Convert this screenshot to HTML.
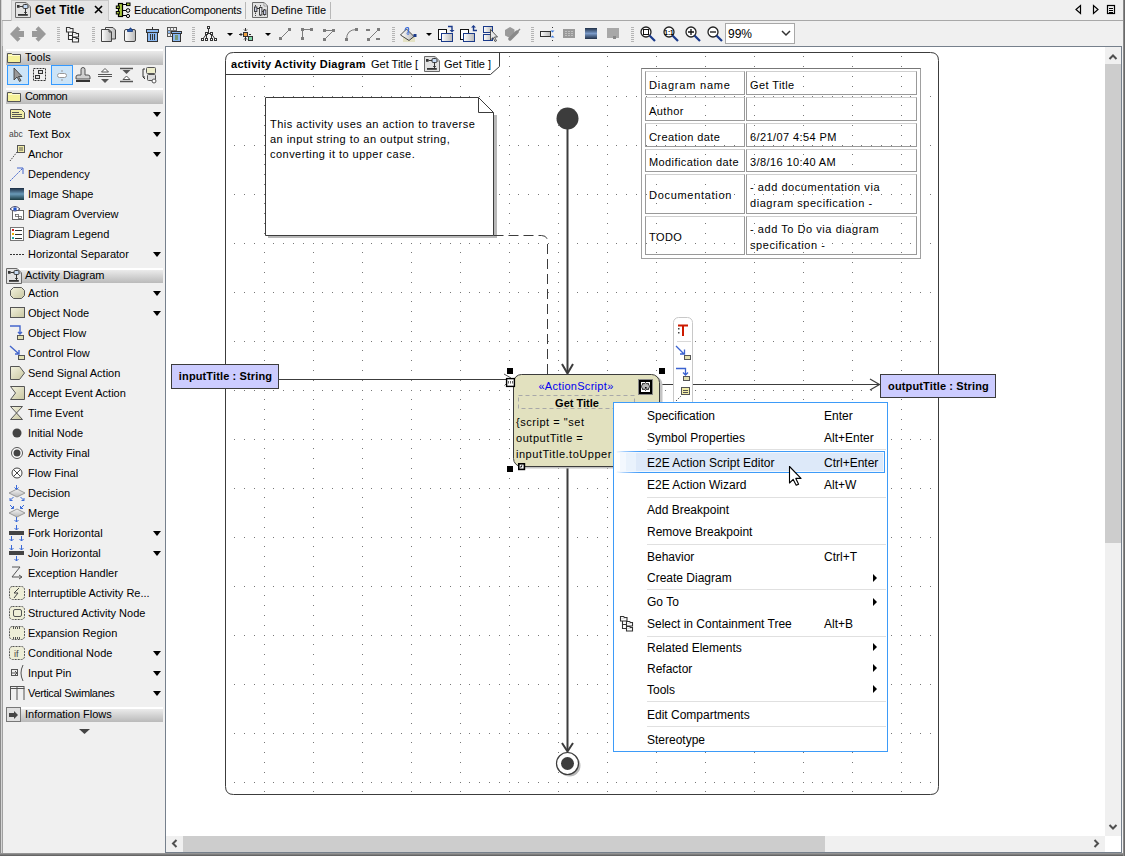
<!DOCTYPE html><html><head><meta charset="utf-8"><style>
*{margin:0;padding:0;box-sizing:border-box}
html,body{width:1125px;height:856px;overflow:hidden;background:#f0f0f0;font-family:"Liberation Sans",sans-serif;font-size:12px;color:#000}
.a{position:absolute}
.t{position:absolute;white-space:nowrap;line-height:14px}
</style></head><body><div class="a" style="left:0;top:0;width:1px;height:856px;background:#8a8a8a"></div><div class="a" style="left:1px;top:0;width:1px;height:856px;background:#d4d4d4"></div><div class="a" style="left:2px;top:21px;width:1px;height:835px;background:#a0a0a0"></div><div class="a" style="left:0;top:853px;width:1125px;height:3px;background:linear-gradient(#a0a0a0,#5a5a5a)"></div><div class="a" style="left:1123px;top:0;width:2px;height:856px;background:linear-gradient(90deg,#9a9a9a,#5a5a5a)"></div><div class="a" style="left:2px;top:20px;width:1121px;height:1px;background:#a8a8a8"></div><div class="a" style="left:11px;top:0;width:98px;height:21px;background:#e4e4e4;border:1px solid #c8c8c8;border-bottom:none"></div><div class="t" style="left:35px;top:3px;font-weight:bold;font-size:12px;letter-spacing:0.2px">Get Title</div><div class="t" style="left:134px;top:3px;font-size:11px;letter-spacing:-0.2px">EducationComponents</div><div class="a" style="left:245px;top:2px;width:1px;height:17px;background:#b8b8b8"></div><div class="t" style="left:271px;top:3px;font-size:11px">Define Title</div><div class="a" style="left:330px;top:2px;width:1px;height:17px;background:#b8b8b8"></div><div class="a" style="left:2px;top:21px;width:1px;height:25px;background:#c8c8c8"></div><div class="a" style="left:725px;top:23px;width:70px;height:21px;background:#fff;border:1px solid #a8a8a8"></div><div class="t" style="left:728px;top:27px;font-size:12px">99%</div><svg class="a" style="left:0;top:0" width="1125" height="48"><defs><linearGradient id="imgG" x1="0" y1="0" x2="0" y2="1"><stop offset="0" stop-color="#203048"/><stop offset="0.5" stop-color="#7a9ac8"/><stop offset="1" stop-color="#203048"/></linearGradient><linearGradient id="docG" x1="0" y1="0" x2="1" y2="0"><stop offset="0" stop-color="#ffffff"/><stop offset="1" stop-color="#b8b8b8"/></linearGradient></defs><path d="M95 6L102 13M102 6L95 13" stroke="#000" stroke-width="1.6"/><path d="M1080.5 5.5V13.5L1076 9.5Z" fill="none" stroke="#000" stroke-width="1.2"/><path d="M1093.5 5.5V13.5L1098 9.5Z" fill="none" stroke="#000" stroke-width="1.2"/><rect x="1107.5" y="5.5" width="7" height="8" fill="none" stroke="#000" stroke-width="1.2"/><path d="M1109 8.5H1113M1109 10.5H1113M1109 12.5H1113" stroke="#000" stroke-width="1"/><path d="M15.5 2.5H26L30.5 7V17.5H15.5Z" fill="#e2e2e2" stroke="#6a6a6a"/><path d="M26 2.5V7H30.5Z" fill="#fff" stroke="#888" stroke-width="0.8"/><rect x="17" y="5" width="2.6" height="2.8" fill="#333"/><path d="M19.5 6.5H23" stroke="#333"/><rect x="23" y="4.5" width="5" height="4" rx="1.2" fill="#c8dcf4" stroke="#333"/><path d="M25.5 8.5V14M24.2 12.5H26.8" stroke="#333"/><rect x="18" y="14" width="9.8" height="1.8" fill="#333"/><rect x="118.5" y="3.5" width="4" height="13" fill="#a8c83c" stroke="#000" stroke-width="1.2"/><rect x="116.3" y="6" width="3" height="2.5" fill="#a8c83c" stroke="#000"/><rect x="116.3" y="11.5" width="3" height="2.5" fill="#a8c83c" stroke="#000"/><path d="M122.5 4.5H126M122.5 10.5H126.5M122.5 15.5H126.5" stroke="#000"/><rect x="126.5" y="3" width="3.5" height="2.6" fill="#a8c83c" stroke="#000"/><circle cx="128" cy="10.5" r="1.8" fill="#eee" stroke="#000"/><circle cx="128" cy="16" r="1.6" fill="#eee" stroke="#000"/><path d="M252.5 2.5H264L267.5 6V17.5H252.5Z" fill="#e2e2e2" stroke="#6a6a6a"/><path d="M264 2.5V6H267.5Z" fill="#fff" stroke="#888" stroke-width="0.8"/><path d="M255.5 5V16M260.5 5V16M264.5 9V16" stroke="#444" stroke-dasharray="1.5 1"/><rect x="254.5" y="7" width="2.4" height="4.5" fill="#c8cde8" stroke="#333" stroke-width="0.9"/><rect x="259.5" y="7.5" width="2.4" height="7.5" fill="#e8e8f0" stroke="#333" stroke-width="0.9"/><rect x="263.5" y="10" width="2.4" height="4.5" fill="#c8cde8" stroke="#333" stroke-width="0.9"/><path d="M257 8.5H259.5M262 11.5H263.5" stroke="#333"/><path d="M10 34L17.5 26.3L20.5 29.3L18.5 31H24V37H18.5L20.5 38.7L17.5 41.7Z" fill="#9a9a9a"/><path d="M46 34L38.5 26.3L35.5 29.3L37.5 31H32V37H37.5L35.5 38.7L38.5 41.7Z" fill="#9a9a9a"/><rect x="57" y="27" width="3" height="1" fill="#b4b4b4"/><rect x="57" y="29" width="3" height="1" fill="#b4b4b4"/><rect x="57" y="31" width="3" height="1" fill="#b4b4b4"/><rect x="57" y="33" width="3" height="1" fill="#b4b4b4"/><rect x="57" y="35" width="3" height="1" fill="#b4b4b4"/><rect x="57" y="37" width="3" height="1" fill="#b4b4b4"/><rect x="57" y="39" width="3" height="1" fill="#b4b4b4"/><rect x="57" y="41" width="3" height="1" fill="#b4b4b4"/><rect x="92" y="27" width="3" height="1" fill="#b4b4b4"/><rect x="92" y="29" width="3" height="1" fill="#b4b4b4"/><rect x="92" y="31" width="3" height="1" fill="#b4b4b4"/><rect x="92" y="33" width="3" height="1" fill="#b4b4b4"/><rect x="92" y="35" width="3" height="1" fill="#b4b4b4"/><rect x="92" y="37" width="3" height="1" fill="#b4b4b4"/><rect x="92" y="39" width="3" height="1" fill="#b4b4b4"/><rect x="92" y="41" width="3" height="1" fill="#b4b4b4"/><rect x="192" y="27" width="3" height="1" fill="#b4b4b4"/><rect x="192" y="29" width="3" height="1" fill="#b4b4b4"/><rect x="192" y="31" width="3" height="1" fill="#b4b4b4"/><rect x="192" y="33" width="3" height="1" fill="#b4b4b4"/><rect x="192" y="35" width="3" height="1" fill="#b4b4b4"/><rect x="192" y="37" width="3" height="1" fill="#b4b4b4"/><rect x="192" y="39" width="3" height="1" fill="#b4b4b4"/><rect x="192" y="41" width="3" height="1" fill="#b4b4b4"/><rect x="392" y="27" width="3" height="1" fill="#b4b4b4"/><rect x="392" y="29" width="3" height="1" fill="#b4b4b4"/><rect x="392" y="31" width="3" height="1" fill="#b4b4b4"/><rect x="392" y="33" width="3" height="1" fill="#b4b4b4"/><rect x="392" y="35" width="3" height="1" fill="#b4b4b4"/><rect x="392" y="37" width="3" height="1" fill="#b4b4b4"/><rect x="392" y="39" width="3" height="1" fill="#b4b4b4"/><rect x="392" y="41" width="3" height="1" fill="#b4b4b4"/><rect x="531" y="27" width="3" height="1" fill="#b4b4b4"/><rect x="531" y="29" width="3" height="1" fill="#b4b4b4"/><rect x="531" y="31" width="3" height="1" fill="#b4b4b4"/><rect x="531" y="33" width="3" height="1" fill="#b4b4b4"/><rect x="531" y="35" width="3" height="1" fill="#b4b4b4"/><rect x="531" y="37" width="3" height="1" fill="#b4b4b4"/><rect x="531" y="39" width="3" height="1" fill="#b4b4b4"/><rect x="531" y="41" width="3" height="1" fill="#b4b4b4"/><rect x="631" y="27" width="3" height="1" fill="#b4b4b4"/><rect x="631" y="29" width="3" height="1" fill="#b4b4b4"/><rect x="631" y="31" width="3" height="1" fill="#b4b4b4"/><rect x="631" y="33" width="3" height="1" fill="#b4b4b4"/><rect x="631" y="35" width="3" height="1" fill="#b4b4b4"/><rect x="631" y="37" width="3" height="1" fill="#b4b4b4"/><rect x="631" y="39" width="3" height="1" fill="#b4b4b4"/><rect x="631" y="41" width="3" height="1" fill="#b4b4b4"/><g transform="translate(-554,-589)"><path d="M620.5 616.5h3l1 1h2.5v3.5h-6.5zM622.5 621v7.5h4v-7.5M622.5 624.5h4M626.5 621.5h3l1 1h2v3.5h-6zM626.5 626.5h3l1 1h2v3.5h-6z" fill="#fff" stroke="#333" stroke-width="1.1"/><path d="M621.5 618.5h4M627.5 623.5h4M627.5 628.5h4" stroke="#ddd"/></g><path d="M105.5 27.5h7.5l2.5 2.5v9h-10z" fill="url(#docG)" stroke="#444"/><path d="M101.5 29.5h7.5l2.5 2.5v9.5h-10z" fill="url(#docG)" stroke="#444"/><path d="M109 29.5v2.5h2.5" fill="none" stroke="#444"/><rect x="124.5" y="29.5" width="11" height="12" rx="1.5" fill="url(#docG)" stroke="#444"/><path d="M127.5 31.5v-2h2l.5-1.5h1l.5 1.5h1v2z" fill="#2d5fb0" stroke="#1a3a7a" stroke-width="0.8"/><rect x="147.5" y="32.5" width="10" height="9" fill="#8ab8f0" stroke="#333"/><rect x="146.5" y="29.5" width="12" height="3" fill="#8ab8f0" stroke="#333"/><path d="M152.5 27v2.5" stroke="#333"/><path d="M150.5 34v6M152.5 34v6M154.5 34v6" stroke="#333"/><rect x="167.5" y="27.5" width="9" height="9" fill="#f0f0f0" stroke="#555"/><path d="M170.5 27.5v9M173.5 27.5v6M167.5 30.5h9M167.5 33.5h5" stroke="#777"/><rect x="168" y="31" width="2" height="2" fill="#8ab8f0"/><rect x="172.5" y="33.5" width="8" height="8" fill="#8ab8f0" stroke="#333"/><rect x="171.5" y="31.5" width="10" height="2" fill="#8ab8f0" stroke="#333"/><rect x="175" y="35" width="3" height="5" fill="#7a9a7a"/><path d="M208.5 29v4M206.5 33.5h5M206.5 34v5.5M211.5 34v5.5M206.5 34L202.5 39.5M211.5 34L215.5 39.5" fill="none" stroke="#333"/><rect x="207.5" y="26.5" width="2" height="2" fill="#fff" stroke="#333"/><rect x="205.5" y="32.5" width="2" height="2" fill="#fff" stroke="#333"/><rect x="210.5" y="32.5" width="2" height="2" fill="#fff" stroke="#333"/><rect x="201.5" y="38.5" width="2" height="2" fill="#fff" stroke="#333"/><rect x="205.5" y="38.5" width="2" height="2" fill="#fff" stroke="#333"/><rect x="210.5" y="38.5" width="2" height="2" fill="#fff" stroke="#333"/><rect x="214.5" y="38.5" width="2" height="2" fill="#fff" stroke="#333"/><path d="M227 33h6l-3 3z" fill="#000"/><path d="M245.5 28v3M245.5 37v4M239 34.5h3M249 34.5h2M244 29.5l1.5 1.5 1.5-1.5M244 39.5l1.5-1.5 1.5 1.5M240.5 33l1.5 1.5-1.5 1.5" stroke="#333" fill="none"/><rect x="243.5" y="32.5" width="4" height="4" fill="#f0a040" stroke="#333"/><rect x="248.5" y="36.5" width="4" height="4" fill="#7fd8a8" stroke="#333"/><path d="M265 33h6l-3 3z" fill="#000"/><path d="M280.5 38.5L289.5 29.5" stroke="#7c7c7c" fill="none"/><rect x="279.0" y="37.0" width="3" height="3" fill="#7c7c7c"/><rect x="288.0" y="28.0" width="3" height="3" fill="#7c7c7c"/><path d="M302.5 38.5V29.5H311.5" stroke="#7c7c7c" fill="none"/><rect x="301.0" y="37.0" width="3" height="3" fill="#7c7c7c"/><rect x="301.0" y="28.0" width="3" height="3" fill="#7c7c7c"/><rect x="310.0" y="28.0" width="3" height="3" fill="#7c7c7c"/><path d="M324.5 30.5H333.5L324.5 39.5" stroke="#7c7c7c" fill="none"/><rect x="323.0" y="29.0" width="3" height="3" fill="#7c7c7c"/><rect x="332.0" y="29.0" width="3" height="3" fill="#7c7c7c"/><rect x="323.0" y="38.0" width="3" height="3" fill="#7c7c7c"/><path d="M346.5 39.5Q346.5 29.5 356.5 29.5" stroke="#7c7c7c" fill="none"/><rect x="345.0" y="38.0" width="3" height="3" fill="#7c7c7c"/><rect x="355.0" y="28.0" width="3" height="3" fill="#7c7c7c"/><path d="M368.5 39.5L378.5 29.5" stroke="#7c7c7c" fill="none"/><rect x="366" y="29" width="4" height="2" fill="#7c7c7c"/><rect x="376" y="38" width="4" height="2" fill="#7c7c7c"/><rect x="367.0" y="38.0" width="3" height="3" fill="#7c7c7c"/><rect x="377.0" y="28.0" width="3" height="3" fill="#7c7c7c"/><rect x="403" y="37" width="12" height="5" fill="#e4e2c4"/><path d="M400.5 35L406.5 29L414 36.5L409 40.5Z" fill="url(#docG)" stroke="#333" stroke-width="0.9"/><path d="M405 30.5Q405.5 27 408 27.5Q409.5 29 408 32.5" stroke="#3a6ad8" stroke-width="1.1" fill="none"/><circle cx="408" cy="33.5" r="1" fill="none" stroke="#3a6ad8" stroke-width="0.8"/><rect x="413.5" y="34" width="3" height="3" fill="#1a3a8a"/><path d="M426 33h6l-3 3z" fill="#000"/><rect x="438.5" y="29.5" width="8" height="10" fill="#fff" stroke="#111"/><rect x="441.5" y="33.5" width="11" height="8" fill="url(#docG)" stroke="#1a3a8a"/><path d="M448 26.5H452V30.5" stroke="#1a3a8a" stroke-width="1.4" fill="none"/><path d="M449.5 30L452 32.5L454.5 30Z" fill="#1a3a8a"/><rect x="460.5" y="29.5" width="8" height="10" fill="#fff" stroke="#111"/><rect x="463.5" y="33.5" width="11" height="8" fill="url(#docG)" stroke="#1a3a8a"/><path d="M477 30.5H473.5V26.5" stroke="#1a3a8a" stroke-width="1.4" fill="none"/><path d="M471 27.5L473.5 25L476 27.5Z" fill="#1a3a8a"/><rect x="483.5" y="26.5" width="9" height="6" fill="url(#docG)" stroke="#1a3a8a"/><rect x="483.5" y="34.5" width="9" height="6" fill="url(#docG)" stroke="#1a3a8a"/><path d="M490.5 29.5V40L493 37.5L495 41.5L496.5 40.8L494.5 37H497.5Z" fill="#e8e8e8" stroke="#333" stroke-width="0.8"/><path d="M505 30L510 27L514.5 29.5V35.5L510 38L505 35.5Z" fill="#9a9a9a"/><path d="M510 39L517 32" stroke="#8a8a8a" stroke-width="3.5" stroke-linecap="round"/><path d="M517 32L520 29" stroke="#8a8a8a" stroke-width="1.5"/><rect x="540.5" y="31.5" width="10" height="5" fill="url(#docG)" stroke="#333"/><path d="M552.5 27v1M552.5 40v1" stroke="#333"/><path d="M550.5 30.5h4l-2 2z" fill="#3a7ae0"/><path d="M550.5 37.5h4l-2-2z" fill="#3a7ae0"/><rect x="563" y="29" width="12" height="9" fill="#9a9a9a"/><path d="M565 31.5h2M568 31.5h2M571 31.5h2M565 33.5h2M568 33.5h2M571 33.5h2M565 35.5h2M568 35.5h2M571 35.5h2" stroke="#c0c0c0"/><rect x="585" y="28" width="12" height="11" fill="url(#imgG)"/><rect x="607" y="28" width="12" height="10" fill="#a8a8a8"/><rect x="613" y="36" width="3" height="3" fill="#888"/><circle cx="646" cy="32" r="5" fill="#fff" stroke="#222" stroke-width="1.3"/><path d="M649.5 35.5L655 41" stroke="#1a3a8a" stroke-width="2.2"/><rect x="643.5" y="29.5" width="5" height="5" fill="none" stroke="#111"/><circle cx="669" cy="32" r="5" fill="#fff" stroke="#222" stroke-width="1.3"/><path d="M672.5 35.5L678 41" stroke="#1a3a8a" stroke-width="2.2"/><text x="669" y="34.5" font-size="6.5" text-anchor="middle" font-family="Liberation Sans" font-weight="bold">1:1</text><circle cx="691" cy="32" r="5" fill="#fff" stroke="#222" stroke-width="1.3"/><path d="M694.5 35.5L700 41" stroke="#1a3a8a" stroke-width="2.2"/><path d="M688 32H694M691 29V35" stroke="#111" stroke-width="1.3"/><circle cx="713" cy="32" r="5" fill="#fff" stroke="#222" stroke-width="1.3"/><path d="M716.5 35.5L722 41" stroke="#1a3a8a" stroke-width="2.2"/><path d="M710 32H716" stroke="#111" stroke-width="1.3"/><path d="M782 31l4 4l4-4" stroke="#333" stroke-width="1.5" fill="none"/></svg><div class="a" style="left:165px;top:46px;width:1px;height:807px;background:#76808c"></div><div class="a" style="left:6px;top:49px;width:157px;height:16px;background:linear-gradient(#fff 0px,#fff 2px,#ebebeb 2px,#d6d6d6 50%,#bababa 100%)"></div><div class="t" style="left:25px;top:50px;font-size:11px;letter-spacing:0px">Tools</div><div class="a" style="left:6px;top:88px;width:157px;height:16px;background:linear-gradient(#fff 0px,#fff 2px,#ebebeb 2px,#d6d6d6 50%,#bababa 100%)"></div><div class="t" style="left:25px;top:89px;font-size:11px;letter-spacing:-0.4px">Common</div><div class="a" style="left:6px;top:268px;width:157px;height:15px;background:linear-gradient(#fff 0px,#fff 2px,#ebebeb 2px,#d6d6d6 50%,#bababa 100%)"></div><div class="t" style="left:25px;top:268px;font-size:11px;letter-spacing:0px">Activity Diagram</div><div class="a" style="left:6px;top:707px;width:157px;height:15px;background:linear-gradient(#fff 0px,#fff 2px,#ebebeb 2px,#d6d6d6 50%,#bababa 100%)"></div><div class="t" style="left:25px;top:707px;font-size:11px;letter-spacing:0px">Information Flows</div><div class="t" style="left:28px;top:107px;font-size:11px;letter-spacing:0px">Note</div><div class="a" style="left:153px;top:112px;width:0;height:0;border-left:4px solid transparent;border-right:4px solid transparent;border-top:5px solid #000"></div><div class="t" style="left:28px;top:127px;font-size:11px;letter-spacing:0px">Text Box</div><div class="a" style="left:153px;top:132px;width:0;height:0;border-left:4px solid transparent;border-right:4px solid transparent;border-top:5px solid #000"></div><div class="t" style="left:28px;top:147px;font-size:11px;letter-spacing:0px">Anchor</div><div class="a" style="left:153px;top:152px;width:0;height:0;border-left:4px solid transparent;border-right:4px solid transparent;border-top:5px solid #000"></div><div class="t" style="left:28px;top:167px;font-size:11px;letter-spacing:0px">Dependency</div><div class="t" style="left:28px;top:187px;font-size:11px;letter-spacing:0px">Image Shape</div><div class="t" style="left:28px;top:207px;font-size:11px;letter-spacing:0px">Diagram Overview</div><div class="t" style="left:28px;top:227px;font-size:11px;letter-spacing:0px">Diagram Legend</div><div class="t" style="left:28px;top:247px;font-size:11px;letter-spacing:0px">Horizontal Separator</div><div class="a" style="left:153px;top:252px;width:0;height:0;border-left:4px solid transparent;border-right:4px solid transparent;border-top:5px solid #000"></div><div class="t" style="left:28px;top:286px;font-size:11px;letter-spacing:0px">Action</div><div class="a" style="left:153px;top:291px;width:0;height:0;border-left:4px solid transparent;border-right:4px solid transparent;border-top:5px solid #000"></div><div class="t" style="left:28px;top:306px;font-size:11px;letter-spacing:0px">Object Node</div><div class="a" style="left:153px;top:311px;width:0;height:0;border-left:4px solid transparent;border-right:4px solid transparent;border-top:5px solid #000"></div><div class="t" style="left:28px;top:326px;font-size:11px;letter-spacing:0px">Object Flow</div><div class="t" style="left:28px;top:346px;font-size:11px;letter-spacing:0px">Control Flow</div><div class="t" style="left:28px;top:366px;font-size:11px;letter-spacing:0px">Send Signal Action</div><div class="t" style="left:28px;top:386px;font-size:11px;letter-spacing:0px">Accept Event Action</div><div class="t" style="left:28px;top:406px;font-size:11px;letter-spacing:0px">Time Event</div><div class="t" style="left:28px;top:426px;font-size:11px;letter-spacing:0px">Initial Node</div><div class="t" style="left:28px;top:446px;font-size:11px;letter-spacing:0px">Activity Final</div><div class="t" style="left:28px;top:466px;font-size:11px;letter-spacing:0px">Flow Final</div><div class="t" style="left:28px;top:486px;font-size:11px;letter-spacing:0px">Decision</div><div class="t" style="left:28px;top:506px;font-size:11px;letter-spacing:0px">Merge</div><div class="t" style="left:28px;top:526px;font-size:11px;letter-spacing:0px">Fork Horizontal</div><div class="a" style="left:153px;top:531px;width:0;height:0;border-left:4px solid transparent;border-right:4px solid transparent;border-top:5px solid #000"></div><div class="t" style="left:28px;top:546px;font-size:11px;letter-spacing:0px">Join Horizontal</div><div class="a" style="left:153px;top:551px;width:0;height:0;border-left:4px solid transparent;border-right:4px solid transparent;border-top:5px solid #000"></div><div class="t" style="left:28px;top:566px;font-size:11px;letter-spacing:0px">Exception Handler</div><div class="t" style="left:28px;top:586px;font-size:11px;letter-spacing:0px">Interruptible Activity Re...</div><div class="t" style="left:28px;top:606px;font-size:11px;letter-spacing:0px">Structured Activity Node</div><div class="t" style="left:28px;top:626px;font-size:11px;letter-spacing:0px">Expansion Region</div><div class="t" style="left:28px;top:646px;font-size:11px;letter-spacing:0px">Conditional Node</div><div class="a" style="left:153px;top:651px;width:0;height:0;border-left:4px solid transparent;border-right:4px solid transparent;border-top:5px solid #000"></div><div class="t" style="left:28px;top:666px;font-size:11px;letter-spacing:0px">Input Pin</div><div class="a" style="left:153px;top:671px;width:0;height:0;border-left:4px solid transparent;border-right:4px solid transparent;border-top:5px solid #000"></div><div class="t" style="left:28px;top:686px;font-size:11px;letter-spacing:-0.33px">Vertical Swimlanes</div><div class="a" style="left:153px;top:691px;width:0;height:0;border-left:4px solid transparent;border-right:4px solid transparent;border-top:5px solid #000"></div><svg class="a" style="left:0;top:46px" width="165" height="700" viewBox="0 46 165 700"><defs><linearGradient id="khaki" x1="0" y1="0" x2="1" y2="1"><stop offset="0" stop-color="#f4f3e0"/><stop offset="1" stop-color="#c8c6a0"/></linearGradient><linearGradient id="dg" x1="0" y1="0" x2="0" y2="1"><stop offset="0" stop-color="#f4f4f4"/><stop offset="1" stop-color="#b8b8b8"/></linearGradient><linearGradient id="imgG2" x1="0" y1="0" x2="0" y2="1"><stop offset="0" stop-color="#1a2a40"/><stop offset="0.5" stop-color="#6a9ab8"/><stop offset="1" stop-color="#1a3a40"/></linearGradient></defs><path d="M7.5 53.5h4l1 1h8v8h-13z" fill="#f6f29a" stroke="#555"/><path d="M8 55.5h12" stroke="#fffbd0"/><path d="M7.5 92.5h4l1 1h8v8h-13z" fill="#f6f29a" stroke="#555"/><path d="M8 94.5h12" stroke="#fffbd0"/><rect x="7.5" y="65.5" width="21" height="19" fill="#cce4f7" stroke="#3399ff"/><rect x="51.5" y="65.5" width="21" height="19" fill="#cce4f7" stroke="#3399ff"/><path d="M14 68V80L17 77L19.5 81.5L21 80.5L18.5 76.5H22Z" fill="#9a9a9a" stroke="#333" stroke-width="0.8"/><rect x="33.5" y="68.5" width="12" height="12" fill="none" stroke="#333" stroke-dasharray="2 1"/><rect x="38.5" y="70.5" width="4" height="3" fill="#ddd" stroke="#333"/><rect x="35.5" y="75.5" width="4" height="3" fill="#ddd" stroke="#333"/><rect x="57.5" y="73.5" width="9" height="4" rx="2" fill="#fff" stroke="#999"/><path d="M62 70v2M62 79v2" stroke="#999"/><path d="M81 69.5q0-2 2-2t2 2v4.5l0 1h3q2 0 2 2v2h-14v-2q0-2 2-2h3v-1z" fill="#d0d0d0" stroke="#444" stroke-width="0.9"/><rect x="76" y="80" width="14" height="2" fill="#333"/><path d="M98 74.5h14M98 76.5h14" stroke="#555"/><path d="M105 68.5l-3.5 3.5h7z" fill="#fff" stroke="#555"/><path d="M105 83l-4-4h8z" fill="#555"/><path d="M120 68.5h13M120 81.5h13" stroke="#555" stroke-width="1.4"/><path d="M126.5 74l-4-4h8z" fill="#555"/><path d="M126.5 76l-3.5 3.5h7z" fill="#fff" stroke="#555"/><path d="M145 69h-2v8h2M143 77l2 2" fill="none" stroke="#333"/><rect x="146.5" y="67.5" width="9" height="6" rx="1" fill="#eeeecc" stroke="#555"/><rect x="147.5" y="74.5" width="8" height="6" rx="1" fill="#ddd" stroke="#555"/><circle cx="154" cy="81" r="2" fill="#fff" stroke="#555"/><path d="M10.5 109.5h11l3 3v6h-14z" fill="#f2eda8" stroke="#555"/><path d="M12 112.5h7M12 114.5h10M12 116.5h10" stroke="#555"/><text x="9" y="137" font-size="8.5" font-family="Liberation Sans" fill="#444">abc</text><rect x="17.5" y="145.5" width="7" height="7" fill="#f2eda8" stroke="#555"/><path d="M19 148h4M19 150h4" stroke="#555"/><path d="M10 161L17 152" stroke="#555" stroke-dasharray="1.5 1"/><path d="M10 181L23 168" stroke="#4466cc" stroke-dasharray="2 1"/><path d="M17 168h6v6" fill="none" stroke="#4466cc"/><rect x="10" y="188" width="14" height="12" fill="url(#imgG2)"/><rect x="12.5" y="210.5" width="11" height="9" fill="#fff" stroke="#666"/><path d="M10 209q5-5 10 0q-5 4-10 0z" fill="#fff" stroke="#446"/><circle cx="15" cy="209" r="1.8" fill="#2255cc"/><rect x="15.5" y="214.5" width="3" height="2" fill="none" stroke="#555" stroke-width="0.7"/><rect x="18.5" y="216.5" width="3" height="2" fill="none" stroke="#555" stroke-width="0.7"/><rect x="10.5" y="227.5" width="13" height="13" fill="#fff" stroke="#777"/><rect x="12" y="229" width="2" height="2" fill="#cc2222"/><rect x="12" y="233" width="2" height="2" fill="#f0b000"/><rect x="12" y="237" width="2" height="2" fill="#22aaaa"/><path d="M15 230.5h7M15 234.5h7M15 238.5h7" stroke="#333"/><path d="M10 254.5h14" stroke="#333" stroke-dasharray="2 1"/><path d="M6.5 268.5H17L21.5 273V283.5H6.5Z" fill="#e2e2e2" stroke="#6a6a6a"/><path d="M17 268.5V273H21.5Z" fill="#fff" stroke="#888" stroke-width="0.8"/><rect x="8" y="271" width="2.6" height="2.8" fill="#333"/><path d="M10.5 272.5H14" stroke="#333"/><rect x="14" y="270.5" width="5" height="4" rx="1.2" fill="#c8dcf4" stroke="#333"/><path d="M16.5 274.5V280M15.2 278.5H17.8" stroke="#333"/><rect x="9" y="280" width="9.8" height="1.8" fill="#333"/><path d="M13.5 287.5h8l3 3v5l-3 3h-8l-3-3v-5z" fill="url(#khaki)" stroke="#555"/><rect x="10.5" y="307.5" width="14" height="10" fill="url(#khaki)" stroke="#555"/><path d="M10 326h10v8M18 332l2 2l2-2" stroke="#4466cc" stroke-width="1.4" fill="none"/><rect x="17.5" y="335.5" width="6" height="4" fill="#e2e0b0" stroke="#555"/><path d="M10 346L19 354M15 354h4v-4" stroke="#4466cc" stroke-width="1.4" fill="none"/><rect x="18.5" y="355.5" width="6" height="4" fill="#e2e0b0" stroke="#555"/><path d="M10.5 366.5h9l5 6.5l-5 6.5h-9z" fill="url(#khaki)" stroke="#555"/><path d="M10.5 386.5h14v13h-14l5-6.5z" fill="url(#khaki)" stroke="#555"/><path d="M10.5 406.5h12l-6 6.5l6 6.5h-12l6-6.5z" fill="url(#khaki)" stroke="#555"/><circle cx="17" cy="433" r="4.5" fill="#444"/><circle cx="17" cy="453" r="5.5" fill="#fff" stroke="#555"/><circle cx="17" cy="453" r="3.5" fill="#444"/><circle cx="17" cy="473" r="5" fill="#fff" stroke="#444"/><path d="M13.5 469.5l7 7M20.5 469.5l-7 7" stroke="#444"/><path d="M9 493l8-4l8 4l-8 4z" fill="url(#dg)" stroke="#999"/><path d="M16.5 485v4.5M14.5 487.5l2 2l2-2M10 500.5l3.5-3.5M24 500.5l-3.5-3.5M10 498v2.5h2.5M24 498v2.5h-2.5" stroke="#3a6ad8" fill="none"/><path d="M9 513l8-4l8 4l-8 4z" fill="url(#dg)" stroke="#999"/><path d="M10 505l3.5 3.5M24 505l-3.5 3.5M11 508.5h2.5v-2.5M23 508.5h-2.5v-2.5M16.5 517v5M14.5 520l2 2l2-2" stroke="#3a6ad8" fill="none"/><rect x="9" y="531" width="15" height="4" fill="#444"/><path d="M16.5 525v5M14.5 528l2 2l2-2M11.5 536v5M9.5 539l2 2l2-2M21.5 536v5M19.5 539l2 2l2-2" stroke="#3a6ad8" fill="none"/><rect x="9" y="551" width="15" height="4" fill="#444"/><path d="M11.5 545v5M9.5 548l2 2l2-2M21.5 545v5M19.5 548l2 2l2-2M16.5 556v5M14.5 559l2 2l2-2" stroke="#3a6ad8" fill="none"/><path d="M12 567h8l-8 10h10M19 575l3 2l-3 2" stroke="#555" fill="none"/><rect x="9.5" y="586.5" width="15" height="13" rx="3" fill="#eeeed8" stroke="#555" stroke-dasharray="2 1"/><path d="M19 588l-5 5h4l-4 5" stroke="#444" fill="none"/><rect x="9.5" y="606.5" width="15" height="13" rx="3" fill="#eeeed8" stroke="#555" stroke-dasharray="2 1"/><rect x="13.5" y="609.5" width="8" height="7" rx="1.5" fill="none" stroke="#555"/><rect x="9.5" y="626.5" width="15" height="13" rx="3" fill="#eeeed8" stroke="#555" stroke-dasharray="2 1"/><path d="M13 628h8M13 638h8" stroke="#555" stroke-width="2" stroke-dasharray="1 1"/><rect x="9.5" y="646.5" width="15" height="13" rx="3" fill="#eeeed8" stroke="#555" stroke-dasharray="2 1"/><text x="14" y="657" font-size="9" font-family="Liberation Sans" fill="#444">if</text><rect x="11.5" y="669.5" width="6" height="6" fill="none" stroke="#555"/><path d="M12 673h4M15 671l2 2l-2 2" stroke="#555" fill="none"/><path d="M23 665q-4 8 0 16" stroke="#555" fill="none"/><path d="M10.5 686v14M10.5 686.5h14M10.5 688.5h14M17 687v13M24 687v13" stroke="#555" fill="none"/><rect x="6.5" y="707.5" width="14" height="14" fill="#e0e0e0" stroke="#777"/><path d="M9 713h5v-2l4 4l-4 4v-2h-5z" fill="#444"/><path d="M79 729h11l-5.5 5z" fill="#444"/></svg><div class="a" style="left:165px;top:46px;width:957px;height:807px;background:#fff;border:1px solid #76808c"></div><svg class="a" style="left:0;top:0" width="1125" height="856" viewBox="0 0 1125 856"><path d="M234 96h1v1h-1zM234 145h1v1h-1zM234 194h1v1h-1zM234 243h1v1h-1zM234 292h1v1h-1zM234 341h1v1h-1zM234 390h1v1h-1zM234 439h1v1h-1zM234 488h1v1h-1zM234 537h1v1h-1zM234 586h1v1h-1zM234 635h1v1h-1zM234 684h1v1h-1zM234 733h1v1h-1zM234 782h1v1h-1zM244 96h1v1h-1zM244 145h1v1h-1zM244 194h1v1h-1zM244 243h1v1h-1zM244 292h1v1h-1zM244 341h1v1h-1zM244 390h1v1h-1zM244 439h1v1h-1zM244 488h1v1h-1zM244 537h1v1h-1zM244 586h1v1h-1zM244 635h1v1h-1zM244 684h1v1h-1zM244 733h1v1h-1zM244 782h1v1h-1zM254 96h1v1h-1zM254 145h1v1h-1zM254 194h1v1h-1zM254 243h1v1h-1zM254 292h1v1h-1zM254 341h1v1h-1zM254 390h1v1h-1zM254 439h1v1h-1zM254 488h1v1h-1zM254 537h1v1h-1zM254 586h1v1h-1zM254 635h1v1h-1zM254 684h1v1h-1zM254 733h1v1h-1zM254 782h1v1h-1zM264 56h1v1h-1zM264 66h1v1h-1zM264 76h1v1h-1zM264 86h1v1h-1zM264 96h1v1h-1zM264 105h1v1h-1zM264 115h1v1h-1zM264 125h1v1h-1zM264 135h1v1h-1zM264 145h1v1h-1zM264 154h1v1h-1zM264 164h1v1h-1zM264 174h1v1h-1zM264 184h1v1h-1zM264 194h1v1h-1zM264 203h1v1h-1zM264 213h1v1h-1zM264 223h1v1h-1zM264 233h1v1h-1zM264 243h1v1h-1zM264 252h1v1h-1zM264 262h1v1h-1zM264 272h1v1h-1zM264 282h1v1h-1zM264 292h1v1h-1zM264 301h1v1h-1zM264 311h1v1h-1zM264 321h1v1h-1zM264 331h1v1h-1zM264 341h1v1h-1zM264 350h1v1h-1zM264 360h1v1h-1zM264 370h1v1h-1zM264 380h1v1h-1zM264 390h1v1h-1zM264 399h1v1h-1zM264 409h1v1h-1zM264 419h1v1h-1zM264 429h1v1h-1zM264 439h1v1h-1zM264 448h1v1h-1zM264 458h1v1h-1zM264 468h1v1h-1zM264 478h1v1h-1zM264 488h1v1h-1zM264 497h1v1h-1zM264 507h1v1h-1zM264 517h1v1h-1zM264 527h1v1h-1zM264 537h1v1h-1zM264 546h1v1h-1zM264 556h1v1h-1zM264 566h1v1h-1zM264 576h1v1h-1zM264 586h1v1h-1zM264 595h1v1h-1zM264 605h1v1h-1zM264 615h1v1h-1zM264 625h1v1h-1zM264 635h1v1h-1zM264 644h1v1h-1zM264 654h1v1h-1zM264 664h1v1h-1zM264 674h1v1h-1zM264 684h1v1h-1zM264 693h1v1h-1zM264 703h1v1h-1zM264 713h1v1h-1zM264 723h1v1h-1zM264 733h1v1h-1zM264 742h1v1h-1zM264 752h1v1h-1zM264 762h1v1h-1zM264 772h1v1h-1zM264 782h1v1h-1zM264 791h1v1h-1zM273 96h1v1h-1zM273 145h1v1h-1zM273 194h1v1h-1zM273 243h1v1h-1zM273 292h1v1h-1zM273 341h1v1h-1zM273 390h1v1h-1zM273 439h1v1h-1zM273 488h1v1h-1zM273 537h1v1h-1zM273 586h1v1h-1zM273 635h1v1h-1zM273 684h1v1h-1zM273 733h1v1h-1zM273 782h1v1h-1zM283 96h1v1h-1zM283 145h1v1h-1zM283 194h1v1h-1zM283 243h1v1h-1zM283 292h1v1h-1zM283 341h1v1h-1zM283 390h1v1h-1zM283 439h1v1h-1zM283 488h1v1h-1zM283 537h1v1h-1zM283 586h1v1h-1zM283 635h1v1h-1zM283 684h1v1h-1zM283 733h1v1h-1zM283 782h1v1h-1zM293 96h1v1h-1zM293 145h1v1h-1zM293 194h1v1h-1zM293 243h1v1h-1zM293 292h1v1h-1zM293 341h1v1h-1zM293 390h1v1h-1zM293 439h1v1h-1zM293 488h1v1h-1zM293 537h1v1h-1zM293 586h1v1h-1zM293 635h1v1h-1zM293 684h1v1h-1zM293 733h1v1h-1zM293 782h1v1h-1zM303 96h1v1h-1zM303 145h1v1h-1zM303 194h1v1h-1zM303 243h1v1h-1zM303 292h1v1h-1zM303 341h1v1h-1zM303 390h1v1h-1zM303 439h1v1h-1zM303 488h1v1h-1zM303 537h1v1h-1zM303 586h1v1h-1zM303 635h1v1h-1zM303 684h1v1h-1zM303 733h1v1h-1zM303 782h1v1h-1zM313 56h1v1h-1zM313 66h1v1h-1zM313 76h1v1h-1zM313 86h1v1h-1zM313 96h1v1h-1zM313 105h1v1h-1zM313 115h1v1h-1zM313 125h1v1h-1zM313 135h1v1h-1zM313 145h1v1h-1zM313 154h1v1h-1zM313 164h1v1h-1zM313 174h1v1h-1zM313 184h1v1h-1zM313 194h1v1h-1zM313 203h1v1h-1zM313 213h1v1h-1zM313 223h1v1h-1zM313 233h1v1h-1zM313 243h1v1h-1zM313 252h1v1h-1zM313 262h1v1h-1zM313 272h1v1h-1zM313 282h1v1h-1zM313 292h1v1h-1zM313 301h1v1h-1zM313 311h1v1h-1zM313 321h1v1h-1zM313 331h1v1h-1zM313 341h1v1h-1zM313 350h1v1h-1zM313 360h1v1h-1zM313 370h1v1h-1zM313 380h1v1h-1zM313 390h1v1h-1zM313 399h1v1h-1zM313 409h1v1h-1zM313 419h1v1h-1zM313 429h1v1h-1zM313 439h1v1h-1zM313 448h1v1h-1zM313 458h1v1h-1zM313 468h1v1h-1zM313 478h1v1h-1zM313 488h1v1h-1zM313 497h1v1h-1zM313 507h1v1h-1zM313 517h1v1h-1zM313 527h1v1h-1zM313 537h1v1h-1zM313 546h1v1h-1zM313 556h1v1h-1zM313 566h1v1h-1zM313 576h1v1h-1zM313 586h1v1h-1zM313 595h1v1h-1zM313 605h1v1h-1zM313 615h1v1h-1zM313 625h1v1h-1zM313 635h1v1h-1zM313 644h1v1h-1zM313 654h1v1h-1zM313 664h1v1h-1zM313 674h1v1h-1zM313 684h1v1h-1zM313 693h1v1h-1zM313 703h1v1h-1zM313 713h1v1h-1zM313 723h1v1h-1zM313 733h1v1h-1zM313 742h1v1h-1zM313 752h1v1h-1zM313 762h1v1h-1zM313 772h1v1h-1zM313 782h1v1h-1zM313 791h1v1h-1zM322 96h1v1h-1zM322 145h1v1h-1zM322 194h1v1h-1zM322 243h1v1h-1zM322 292h1v1h-1zM322 341h1v1h-1zM322 390h1v1h-1zM322 439h1v1h-1zM322 488h1v1h-1zM322 537h1v1h-1zM322 586h1v1h-1zM322 635h1v1h-1zM322 684h1v1h-1zM322 733h1v1h-1zM322 782h1v1h-1zM332 96h1v1h-1zM332 145h1v1h-1zM332 194h1v1h-1zM332 243h1v1h-1zM332 292h1v1h-1zM332 341h1v1h-1zM332 390h1v1h-1zM332 439h1v1h-1zM332 488h1v1h-1zM332 537h1v1h-1zM332 586h1v1h-1zM332 635h1v1h-1zM332 684h1v1h-1zM332 733h1v1h-1zM332 782h1v1h-1zM342 96h1v1h-1zM342 145h1v1h-1zM342 194h1v1h-1zM342 243h1v1h-1zM342 292h1v1h-1zM342 341h1v1h-1zM342 390h1v1h-1zM342 439h1v1h-1zM342 488h1v1h-1zM342 537h1v1h-1zM342 586h1v1h-1zM342 635h1v1h-1zM342 684h1v1h-1zM342 733h1v1h-1zM342 782h1v1h-1zM352 96h1v1h-1zM352 145h1v1h-1zM352 194h1v1h-1zM352 243h1v1h-1zM352 292h1v1h-1zM352 341h1v1h-1zM352 390h1v1h-1zM352 439h1v1h-1zM352 488h1v1h-1zM352 537h1v1h-1zM352 586h1v1h-1zM352 635h1v1h-1zM352 684h1v1h-1zM352 733h1v1h-1zM352 782h1v1h-1zM362 56h1v1h-1zM362 66h1v1h-1zM362 76h1v1h-1zM362 86h1v1h-1zM362 96h1v1h-1zM362 105h1v1h-1zM362 115h1v1h-1zM362 125h1v1h-1zM362 135h1v1h-1zM362 145h1v1h-1zM362 154h1v1h-1zM362 164h1v1h-1zM362 174h1v1h-1zM362 184h1v1h-1zM362 194h1v1h-1zM362 203h1v1h-1zM362 213h1v1h-1zM362 223h1v1h-1zM362 233h1v1h-1zM362 243h1v1h-1zM362 252h1v1h-1zM362 262h1v1h-1zM362 272h1v1h-1zM362 282h1v1h-1zM362 292h1v1h-1zM362 301h1v1h-1zM362 311h1v1h-1zM362 321h1v1h-1zM362 331h1v1h-1zM362 341h1v1h-1zM362 350h1v1h-1zM362 360h1v1h-1zM362 370h1v1h-1zM362 380h1v1h-1zM362 390h1v1h-1zM362 399h1v1h-1zM362 409h1v1h-1zM362 419h1v1h-1zM362 429h1v1h-1zM362 439h1v1h-1zM362 448h1v1h-1zM362 458h1v1h-1zM362 468h1v1h-1zM362 478h1v1h-1zM362 488h1v1h-1zM362 497h1v1h-1zM362 507h1v1h-1zM362 517h1v1h-1zM362 527h1v1h-1zM362 537h1v1h-1zM362 546h1v1h-1zM362 556h1v1h-1zM362 566h1v1h-1zM362 576h1v1h-1zM362 586h1v1h-1zM362 595h1v1h-1zM362 605h1v1h-1zM362 615h1v1h-1zM362 625h1v1h-1zM362 635h1v1h-1zM362 644h1v1h-1zM362 654h1v1h-1zM362 664h1v1h-1zM362 674h1v1h-1zM362 684h1v1h-1zM362 693h1v1h-1zM362 703h1v1h-1zM362 713h1v1h-1zM362 723h1v1h-1zM362 733h1v1h-1zM362 742h1v1h-1zM362 752h1v1h-1zM362 762h1v1h-1zM362 772h1v1h-1zM362 782h1v1h-1zM362 791h1v1h-1zM371 96h1v1h-1zM371 145h1v1h-1zM371 194h1v1h-1zM371 243h1v1h-1zM371 292h1v1h-1zM371 341h1v1h-1zM371 390h1v1h-1zM371 439h1v1h-1zM371 488h1v1h-1zM371 537h1v1h-1zM371 586h1v1h-1zM371 635h1v1h-1zM371 684h1v1h-1zM371 733h1v1h-1zM371 782h1v1h-1zM381 96h1v1h-1zM381 145h1v1h-1zM381 194h1v1h-1zM381 243h1v1h-1zM381 292h1v1h-1zM381 341h1v1h-1zM381 390h1v1h-1zM381 439h1v1h-1zM381 488h1v1h-1zM381 537h1v1h-1zM381 586h1v1h-1zM381 635h1v1h-1zM381 684h1v1h-1zM381 733h1v1h-1zM381 782h1v1h-1zM391 96h1v1h-1zM391 145h1v1h-1zM391 194h1v1h-1zM391 243h1v1h-1zM391 292h1v1h-1zM391 341h1v1h-1zM391 390h1v1h-1zM391 439h1v1h-1zM391 488h1v1h-1zM391 537h1v1h-1zM391 586h1v1h-1zM391 635h1v1h-1zM391 684h1v1h-1zM391 733h1v1h-1zM391 782h1v1h-1zM401 96h1v1h-1zM401 145h1v1h-1zM401 194h1v1h-1zM401 243h1v1h-1zM401 292h1v1h-1zM401 341h1v1h-1zM401 390h1v1h-1zM401 439h1v1h-1zM401 488h1v1h-1zM401 537h1v1h-1zM401 586h1v1h-1zM401 635h1v1h-1zM401 684h1v1h-1zM401 733h1v1h-1zM401 782h1v1h-1zM411 56h1v1h-1zM411 66h1v1h-1zM411 76h1v1h-1zM411 86h1v1h-1zM411 96h1v1h-1zM411 105h1v1h-1zM411 115h1v1h-1zM411 125h1v1h-1zM411 135h1v1h-1zM411 145h1v1h-1zM411 154h1v1h-1zM411 164h1v1h-1zM411 174h1v1h-1zM411 184h1v1h-1zM411 194h1v1h-1zM411 203h1v1h-1zM411 213h1v1h-1zM411 223h1v1h-1zM411 233h1v1h-1zM411 243h1v1h-1zM411 252h1v1h-1zM411 262h1v1h-1zM411 272h1v1h-1zM411 282h1v1h-1zM411 292h1v1h-1zM411 301h1v1h-1zM411 311h1v1h-1zM411 321h1v1h-1zM411 331h1v1h-1zM411 341h1v1h-1zM411 350h1v1h-1zM411 360h1v1h-1zM411 370h1v1h-1zM411 380h1v1h-1zM411 390h1v1h-1zM411 399h1v1h-1zM411 409h1v1h-1zM411 419h1v1h-1zM411 429h1v1h-1zM411 439h1v1h-1zM411 448h1v1h-1zM411 458h1v1h-1zM411 468h1v1h-1zM411 478h1v1h-1zM411 488h1v1h-1zM411 497h1v1h-1zM411 507h1v1h-1zM411 517h1v1h-1zM411 527h1v1h-1zM411 537h1v1h-1zM411 546h1v1h-1zM411 556h1v1h-1zM411 566h1v1h-1zM411 576h1v1h-1zM411 586h1v1h-1zM411 595h1v1h-1zM411 605h1v1h-1zM411 615h1v1h-1zM411 625h1v1h-1zM411 635h1v1h-1zM411 644h1v1h-1zM411 654h1v1h-1zM411 664h1v1h-1zM411 674h1v1h-1zM411 684h1v1h-1zM411 693h1v1h-1zM411 703h1v1h-1zM411 713h1v1h-1zM411 723h1v1h-1zM411 733h1v1h-1zM411 742h1v1h-1zM411 752h1v1h-1zM411 762h1v1h-1zM411 772h1v1h-1zM411 782h1v1h-1zM411 791h1v1h-1zM420 96h1v1h-1zM420 145h1v1h-1zM420 194h1v1h-1zM420 243h1v1h-1zM420 292h1v1h-1zM420 341h1v1h-1zM420 390h1v1h-1zM420 439h1v1h-1zM420 488h1v1h-1zM420 537h1v1h-1zM420 586h1v1h-1zM420 635h1v1h-1zM420 684h1v1h-1zM420 733h1v1h-1zM420 782h1v1h-1zM430 96h1v1h-1zM430 145h1v1h-1zM430 194h1v1h-1zM430 243h1v1h-1zM430 292h1v1h-1zM430 341h1v1h-1zM430 390h1v1h-1zM430 439h1v1h-1zM430 488h1v1h-1zM430 537h1v1h-1zM430 586h1v1h-1zM430 635h1v1h-1zM430 684h1v1h-1zM430 733h1v1h-1zM430 782h1v1h-1zM440 96h1v1h-1zM440 145h1v1h-1zM440 194h1v1h-1zM440 243h1v1h-1zM440 292h1v1h-1zM440 341h1v1h-1zM440 390h1v1h-1zM440 439h1v1h-1zM440 488h1v1h-1zM440 537h1v1h-1zM440 586h1v1h-1zM440 635h1v1h-1zM440 684h1v1h-1zM440 733h1v1h-1zM440 782h1v1h-1zM450 96h1v1h-1zM450 145h1v1h-1zM450 194h1v1h-1zM450 243h1v1h-1zM450 292h1v1h-1zM450 341h1v1h-1zM450 390h1v1h-1zM450 439h1v1h-1zM450 488h1v1h-1zM450 537h1v1h-1zM450 586h1v1h-1zM450 635h1v1h-1zM450 684h1v1h-1zM450 733h1v1h-1zM450 782h1v1h-1zM460 56h1v1h-1zM460 66h1v1h-1zM460 76h1v1h-1zM460 86h1v1h-1zM460 96h1v1h-1zM460 105h1v1h-1zM460 115h1v1h-1zM460 125h1v1h-1zM460 135h1v1h-1zM460 145h1v1h-1zM460 154h1v1h-1zM460 164h1v1h-1zM460 174h1v1h-1zM460 184h1v1h-1zM460 194h1v1h-1zM460 203h1v1h-1zM460 213h1v1h-1zM460 223h1v1h-1zM460 233h1v1h-1zM460 243h1v1h-1zM460 252h1v1h-1zM460 262h1v1h-1zM460 272h1v1h-1zM460 282h1v1h-1zM460 292h1v1h-1zM460 301h1v1h-1zM460 311h1v1h-1zM460 321h1v1h-1zM460 331h1v1h-1zM460 341h1v1h-1zM460 350h1v1h-1zM460 360h1v1h-1zM460 370h1v1h-1zM460 380h1v1h-1zM460 390h1v1h-1zM460 399h1v1h-1zM460 409h1v1h-1zM460 419h1v1h-1zM460 429h1v1h-1zM460 439h1v1h-1zM460 448h1v1h-1zM460 458h1v1h-1zM460 468h1v1h-1zM460 478h1v1h-1zM460 488h1v1h-1zM460 497h1v1h-1zM460 507h1v1h-1zM460 517h1v1h-1zM460 527h1v1h-1zM460 537h1v1h-1zM460 546h1v1h-1zM460 556h1v1h-1zM460 566h1v1h-1zM460 576h1v1h-1zM460 586h1v1h-1zM460 595h1v1h-1zM460 605h1v1h-1zM460 615h1v1h-1zM460 625h1v1h-1zM460 635h1v1h-1zM460 644h1v1h-1zM460 654h1v1h-1zM460 664h1v1h-1zM460 674h1v1h-1zM460 684h1v1h-1zM460 693h1v1h-1zM460 703h1v1h-1zM460 713h1v1h-1zM460 723h1v1h-1zM460 733h1v1h-1zM460 742h1v1h-1zM460 752h1v1h-1zM460 762h1v1h-1zM460 772h1v1h-1zM460 782h1v1h-1zM460 791h1v1h-1zM469 96h1v1h-1zM469 145h1v1h-1zM469 194h1v1h-1zM469 243h1v1h-1zM469 292h1v1h-1zM469 341h1v1h-1zM469 390h1v1h-1zM469 439h1v1h-1zM469 488h1v1h-1zM469 537h1v1h-1zM469 586h1v1h-1zM469 635h1v1h-1zM469 684h1v1h-1zM469 733h1v1h-1zM469 782h1v1h-1zM479 96h1v1h-1zM479 145h1v1h-1zM479 194h1v1h-1zM479 243h1v1h-1zM479 292h1v1h-1zM479 341h1v1h-1zM479 390h1v1h-1zM479 439h1v1h-1zM479 488h1v1h-1zM479 537h1v1h-1zM479 586h1v1h-1zM479 635h1v1h-1zM479 684h1v1h-1zM479 733h1v1h-1zM479 782h1v1h-1zM489 96h1v1h-1zM489 145h1v1h-1zM489 194h1v1h-1zM489 243h1v1h-1zM489 292h1v1h-1zM489 341h1v1h-1zM489 390h1v1h-1zM489 439h1v1h-1zM489 488h1v1h-1zM489 537h1v1h-1zM489 586h1v1h-1zM489 635h1v1h-1zM489 684h1v1h-1zM489 733h1v1h-1zM489 782h1v1h-1zM499 96h1v1h-1zM499 145h1v1h-1zM499 194h1v1h-1zM499 243h1v1h-1zM499 292h1v1h-1zM499 341h1v1h-1zM499 390h1v1h-1zM499 439h1v1h-1zM499 488h1v1h-1zM499 537h1v1h-1zM499 586h1v1h-1zM499 635h1v1h-1zM499 684h1v1h-1zM499 733h1v1h-1zM499 782h1v1h-1zM509 56h1v1h-1zM509 66h1v1h-1zM509 76h1v1h-1zM509 86h1v1h-1zM509 96h1v1h-1zM509 105h1v1h-1zM509 115h1v1h-1zM509 125h1v1h-1zM509 135h1v1h-1zM509 145h1v1h-1zM509 154h1v1h-1zM509 164h1v1h-1zM509 174h1v1h-1zM509 184h1v1h-1zM509 194h1v1h-1zM509 203h1v1h-1zM509 213h1v1h-1zM509 223h1v1h-1zM509 233h1v1h-1zM509 243h1v1h-1zM509 252h1v1h-1zM509 262h1v1h-1zM509 272h1v1h-1zM509 282h1v1h-1zM509 292h1v1h-1zM509 301h1v1h-1zM509 311h1v1h-1zM509 321h1v1h-1zM509 331h1v1h-1zM509 341h1v1h-1zM509 350h1v1h-1zM509 360h1v1h-1zM509 370h1v1h-1zM509 380h1v1h-1zM509 390h1v1h-1zM509 399h1v1h-1zM509 409h1v1h-1zM509 419h1v1h-1zM509 429h1v1h-1zM509 439h1v1h-1zM509 448h1v1h-1zM509 458h1v1h-1zM509 468h1v1h-1zM509 478h1v1h-1zM509 488h1v1h-1zM509 497h1v1h-1zM509 507h1v1h-1zM509 517h1v1h-1zM509 527h1v1h-1zM509 537h1v1h-1zM509 546h1v1h-1zM509 556h1v1h-1zM509 566h1v1h-1zM509 576h1v1h-1zM509 586h1v1h-1zM509 595h1v1h-1zM509 605h1v1h-1zM509 615h1v1h-1zM509 625h1v1h-1zM509 635h1v1h-1zM509 644h1v1h-1zM509 654h1v1h-1zM509 664h1v1h-1zM509 674h1v1h-1zM509 684h1v1h-1zM509 693h1v1h-1zM509 703h1v1h-1zM509 713h1v1h-1zM509 723h1v1h-1zM509 733h1v1h-1zM509 742h1v1h-1zM509 752h1v1h-1zM509 762h1v1h-1zM509 772h1v1h-1zM509 782h1v1h-1zM509 791h1v1h-1zM518 96h1v1h-1zM518 145h1v1h-1zM518 194h1v1h-1zM518 243h1v1h-1zM518 292h1v1h-1zM518 341h1v1h-1zM518 390h1v1h-1zM518 439h1v1h-1zM518 488h1v1h-1zM518 537h1v1h-1zM518 586h1v1h-1zM518 635h1v1h-1zM518 684h1v1h-1zM518 733h1v1h-1zM518 782h1v1h-1zM528 96h1v1h-1zM528 145h1v1h-1zM528 194h1v1h-1zM528 243h1v1h-1zM528 292h1v1h-1zM528 341h1v1h-1zM528 390h1v1h-1zM528 439h1v1h-1zM528 488h1v1h-1zM528 537h1v1h-1zM528 586h1v1h-1zM528 635h1v1h-1zM528 684h1v1h-1zM528 733h1v1h-1zM528 782h1v1h-1zM538 96h1v1h-1zM538 145h1v1h-1zM538 194h1v1h-1zM538 243h1v1h-1zM538 292h1v1h-1zM538 341h1v1h-1zM538 390h1v1h-1zM538 439h1v1h-1zM538 488h1v1h-1zM538 537h1v1h-1zM538 586h1v1h-1zM538 635h1v1h-1zM538 684h1v1h-1zM538 733h1v1h-1zM538 782h1v1h-1zM548 96h1v1h-1zM548 145h1v1h-1zM548 194h1v1h-1zM548 243h1v1h-1zM548 292h1v1h-1zM548 341h1v1h-1zM548 390h1v1h-1zM548 439h1v1h-1zM548 488h1v1h-1zM548 537h1v1h-1zM548 586h1v1h-1zM548 635h1v1h-1zM548 684h1v1h-1zM548 733h1v1h-1zM548 782h1v1h-1zM558 56h1v1h-1zM558 66h1v1h-1zM558 76h1v1h-1zM558 86h1v1h-1zM558 96h1v1h-1zM558 105h1v1h-1zM558 115h1v1h-1zM558 125h1v1h-1zM558 135h1v1h-1zM558 145h1v1h-1zM558 154h1v1h-1zM558 164h1v1h-1zM558 174h1v1h-1zM558 184h1v1h-1zM558 194h1v1h-1zM558 203h1v1h-1zM558 213h1v1h-1zM558 223h1v1h-1zM558 233h1v1h-1zM558 243h1v1h-1zM558 252h1v1h-1zM558 262h1v1h-1zM558 272h1v1h-1zM558 282h1v1h-1zM558 292h1v1h-1zM558 301h1v1h-1zM558 311h1v1h-1zM558 321h1v1h-1zM558 331h1v1h-1zM558 341h1v1h-1zM558 350h1v1h-1zM558 360h1v1h-1zM558 370h1v1h-1zM558 380h1v1h-1zM558 390h1v1h-1zM558 399h1v1h-1zM558 409h1v1h-1zM558 419h1v1h-1zM558 429h1v1h-1zM558 439h1v1h-1zM558 448h1v1h-1zM558 458h1v1h-1zM558 468h1v1h-1zM558 478h1v1h-1zM558 488h1v1h-1zM558 497h1v1h-1zM558 507h1v1h-1zM558 517h1v1h-1zM558 527h1v1h-1zM558 537h1v1h-1zM558 546h1v1h-1zM558 556h1v1h-1zM558 566h1v1h-1zM558 576h1v1h-1zM558 586h1v1h-1zM558 595h1v1h-1zM558 605h1v1h-1zM558 615h1v1h-1zM558 625h1v1h-1zM558 635h1v1h-1zM558 644h1v1h-1zM558 654h1v1h-1zM558 664h1v1h-1zM558 674h1v1h-1zM558 684h1v1h-1zM558 693h1v1h-1zM558 703h1v1h-1zM558 713h1v1h-1zM558 723h1v1h-1zM558 733h1v1h-1zM558 742h1v1h-1zM558 752h1v1h-1zM558 762h1v1h-1zM558 772h1v1h-1zM558 782h1v1h-1zM558 791h1v1h-1zM567 96h1v1h-1zM567 145h1v1h-1zM567 194h1v1h-1zM567 243h1v1h-1zM567 292h1v1h-1zM567 341h1v1h-1zM567 390h1v1h-1zM567 439h1v1h-1zM567 488h1v1h-1zM567 537h1v1h-1zM567 586h1v1h-1zM567 635h1v1h-1zM567 684h1v1h-1zM567 733h1v1h-1zM567 782h1v1h-1zM577 96h1v1h-1zM577 145h1v1h-1zM577 194h1v1h-1zM577 243h1v1h-1zM577 292h1v1h-1zM577 341h1v1h-1zM577 390h1v1h-1zM577 439h1v1h-1zM577 488h1v1h-1zM577 537h1v1h-1zM577 586h1v1h-1zM577 635h1v1h-1zM577 684h1v1h-1zM577 733h1v1h-1zM577 782h1v1h-1zM587 96h1v1h-1zM587 145h1v1h-1zM587 194h1v1h-1zM587 243h1v1h-1zM587 292h1v1h-1zM587 341h1v1h-1zM587 390h1v1h-1zM587 439h1v1h-1zM587 488h1v1h-1zM587 537h1v1h-1zM587 586h1v1h-1zM587 635h1v1h-1zM587 684h1v1h-1zM587 733h1v1h-1zM587 782h1v1h-1zM597 96h1v1h-1zM597 145h1v1h-1zM597 194h1v1h-1zM597 243h1v1h-1zM597 292h1v1h-1zM597 341h1v1h-1zM597 390h1v1h-1zM597 439h1v1h-1zM597 488h1v1h-1zM597 537h1v1h-1zM597 586h1v1h-1zM597 635h1v1h-1zM597 684h1v1h-1zM597 733h1v1h-1zM597 782h1v1h-1zM607 56h1v1h-1zM607 66h1v1h-1zM607 76h1v1h-1zM607 86h1v1h-1zM607 96h1v1h-1zM607 105h1v1h-1zM607 115h1v1h-1zM607 125h1v1h-1zM607 135h1v1h-1zM607 145h1v1h-1zM607 154h1v1h-1zM607 164h1v1h-1zM607 174h1v1h-1zM607 184h1v1h-1zM607 194h1v1h-1zM607 203h1v1h-1zM607 213h1v1h-1zM607 223h1v1h-1zM607 233h1v1h-1zM607 243h1v1h-1zM607 252h1v1h-1zM607 262h1v1h-1zM607 272h1v1h-1zM607 282h1v1h-1zM607 292h1v1h-1zM607 301h1v1h-1zM607 311h1v1h-1zM607 321h1v1h-1zM607 331h1v1h-1zM607 341h1v1h-1zM607 350h1v1h-1zM607 360h1v1h-1zM607 370h1v1h-1zM607 380h1v1h-1zM607 390h1v1h-1zM607 399h1v1h-1zM607 409h1v1h-1zM607 419h1v1h-1zM607 429h1v1h-1zM607 439h1v1h-1zM607 448h1v1h-1zM607 458h1v1h-1zM607 468h1v1h-1zM607 478h1v1h-1zM607 488h1v1h-1zM607 497h1v1h-1zM607 507h1v1h-1zM607 517h1v1h-1zM607 527h1v1h-1zM607 537h1v1h-1zM607 546h1v1h-1zM607 556h1v1h-1zM607 566h1v1h-1zM607 576h1v1h-1zM607 586h1v1h-1zM607 595h1v1h-1zM607 605h1v1h-1zM607 615h1v1h-1zM607 625h1v1h-1zM607 635h1v1h-1zM607 644h1v1h-1zM607 654h1v1h-1zM607 664h1v1h-1zM607 674h1v1h-1zM607 684h1v1h-1zM607 693h1v1h-1zM607 703h1v1h-1zM607 713h1v1h-1zM607 723h1v1h-1zM607 733h1v1h-1zM607 742h1v1h-1zM607 752h1v1h-1zM607 762h1v1h-1zM607 772h1v1h-1zM607 782h1v1h-1zM607 791h1v1h-1zM616 96h1v1h-1zM616 145h1v1h-1zM616 194h1v1h-1zM616 243h1v1h-1zM616 292h1v1h-1zM616 341h1v1h-1zM616 390h1v1h-1zM616 439h1v1h-1zM616 488h1v1h-1zM616 537h1v1h-1zM616 586h1v1h-1zM616 635h1v1h-1zM616 684h1v1h-1zM616 733h1v1h-1zM616 782h1v1h-1zM626 96h1v1h-1zM626 145h1v1h-1zM626 194h1v1h-1zM626 243h1v1h-1zM626 292h1v1h-1zM626 341h1v1h-1zM626 390h1v1h-1zM626 439h1v1h-1zM626 488h1v1h-1zM626 537h1v1h-1zM626 586h1v1h-1zM626 635h1v1h-1zM626 684h1v1h-1zM626 733h1v1h-1zM626 782h1v1h-1zM636 96h1v1h-1zM636 145h1v1h-1zM636 194h1v1h-1zM636 243h1v1h-1zM636 292h1v1h-1zM636 341h1v1h-1zM636 390h1v1h-1zM636 439h1v1h-1zM636 488h1v1h-1zM636 537h1v1h-1zM636 586h1v1h-1zM636 635h1v1h-1zM636 684h1v1h-1zM636 733h1v1h-1zM636 782h1v1h-1zM646 96h1v1h-1zM646 145h1v1h-1zM646 194h1v1h-1zM646 243h1v1h-1zM646 292h1v1h-1zM646 341h1v1h-1zM646 390h1v1h-1zM646 439h1v1h-1zM646 488h1v1h-1zM646 537h1v1h-1zM646 586h1v1h-1zM646 635h1v1h-1zM646 684h1v1h-1zM646 733h1v1h-1zM646 782h1v1h-1zM656 56h1v1h-1zM656 66h1v1h-1zM656 76h1v1h-1zM656 86h1v1h-1zM656 96h1v1h-1zM656 105h1v1h-1zM656 115h1v1h-1zM656 125h1v1h-1zM656 135h1v1h-1zM656 145h1v1h-1zM656 154h1v1h-1zM656 164h1v1h-1zM656 174h1v1h-1zM656 184h1v1h-1zM656 194h1v1h-1zM656 203h1v1h-1zM656 213h1v1h-1zM656 223h1v1h-1zM656 233h1v1h-1zM656 243h1v1h-1zM656 252h1v1h-1zM656 262h1v1h-1zM656 272h1v1h-1zM656 282h1v1h-1zM656 292h1v1h-1zM656 301h1v1h-1zM656 311h1v1h-1zM656 321h1v1h-1zM656 331h1v1h-1zM656 341h1v1h-1zM656 350h1v1h-1zM656 360h1v1h-1zM656 370h1v1h-1zM656 380h1v1h-1zM656 390h1v1h-1zM656 399h1v1h-1zM656 409h1v1h-1zM656 419h1v1h-1zM656 429h1v1h-1zM656 439h1v1h-1zM656 448h1v1h-1zM656 458h1v1h-1zM656 468h1v1h-1zM656 478h1v1h-1zM656 488h1v1h-1zM656 497h1v1h-1zM656 507h1v1h-1zM656 517h1v1h-1zM656 527h1v1h-1zM656 537h1v1h-1zM656 546h1v1h-1zM656 556h1v1h-1zM656 566h1v1h-1zM656 576h1v1h-1zM656 586h1v1h-1zM656 595h1v1h-1zM656 605h1v1h-1zM656 615h1v1h-1zM656 625h1v1h-1zM656 635h1v1h-1zM656 644h1v1h-1zM656 654h1v1h-1zM656 664h1v1h-1zM656 674h1v1h-1zM656 684h1v1h-1zM656 693h1v1h-1zM656 703h1v1h-1zM656 713h1v1h-1zM656 723h1v1h-1zM656 733h1v1h-1zM656 742h1v1h-1zM656 752h1v1h-1zM656 762h1v1h-1zM656 772h1v1h-1zM656 782h1v1h-1zM656 791h1v1h-1zM665 96h1v1h-1zM665 145h1v1h-1zM665 194h1v1h-1zM665 243h1v1h-1zM665 292h1v1h-1zM665 341h1v1h-1zM665 390h1v1h-1zM665 439h1v1h-1zM665 488h1v1h-1zM665 537h1v1h-1zM665 586h1v1h-1zM665 635h1v1h-1zM665 684h1v1h-1zM665 733h1v1h-1zM665 782h1v1h-1zM675 96h1v1h-1zM675 145h1v1h-1zM675 194h1v1h-1zM675 243h1v1h-1zM675 292h1v1h-1zM675 341h1v1h-1zM675 390h1v1h-1zM675 439h1v1h-1zM675 488h1v1h-1zM675 537h1v1h-1zM675 586h1v1h-1zM675 635h1v1h-1zM675 684h1v1h-1zM675 733h1v1h-1zM675 782h1v1h-1zM685 96h1v1h-1zM685 145h1v1h-1zM685 194h1v1h-1zM685 243h1v1h-1zM685 292h1v1h-1zM685 341h1v1h-1zM685 390h1v1h-1zM685 439h1v1h-1zM685 488h1v1h-1zM685 537h1v1h-1zM685 586h1v1h-1zM685 635h1v1h-1zM685 684h1v1h-1zM685 733h1v1h-1zM685 782h1v1h-1zM695 96h1v1h-1zM695 145h1v1h-1zM695 194h1v1h-1zM695 243h1v1h-1zM695 292h1v1h-1zM695 341h1v1h-1zM695 390h1v1h-1zM695 439h1v1h-1zM695 488h1v1h-1zM695 537h1v1h-1zM695 586h1v1h-1zM695 635h1v1h-1zM695 684h1v1h-1zM695 733h1v1h-1zM695 782h1v1h-1zM705 56h1v1h-1zM705 66h1v1h-1zM705 76h1v1h-1zM705 86h1v1h-1zM705 96h1v1h-1zM705 105h1v1h-1zM705 115h1v1h-1zM705 125h1v1h-1zM705 135h1v1h-1zM705 145h1v1h-1zM705 154h1v1h-1zM705 164h1v1h-1zM705 174h1v1h-1zM705 184h1v1h-1zM705 194h1v1h-1zM705 203h1v1h-1zM705 213h1v1h-1zM705 223h1v1h-1zM705 233h1v1h-1zM705 243h1v1h-1zM705 252h1v1h-1zM705 262h1v1h-1zM705 272h1v1h-1zM705 282h1v1h-1zM705 292h1v1h-1zM705 301h1v1h-1zM705 311h1v1h-1zM705 321h1v1h-1zM705 331h1v1h-1zM705 341h1v1h-1zM705 350h1v1h-1zM705 360h1v1h-1zM705 370h1v1h-1zM705 380h1v1h-1zM705 390h1v1h-1zM705 399h1v1h-1zM705 409h1v1h-1zM705 419h1v1h-1zM705 429h1v1h-1zM705 439h1v1h-1zM705 448h1v1h-1zM705 458h1v1h-1zM705 468h1v1h-1zM705 478h1v1h-1zM705 488h1v1h-1zM705 497h1v1h-1zM705 507h1v1h-1zM705 517h1v1h-1zM705 527h1v1h-1zM705 537h1v1h-1zM705 546h1v1h-1zM705 556h1v1h-1zM705 566h1v1h-1zM705 576h1v1h-1zM705 586h1v1h-1zM705 595h1v1h-1zM705 605h1v1h-1zM705 615h1v1h-1zM705 625h1v1h-1zM705 635h1v1h-1zM705 644h1v1h-1zM705 654h1v1h-1zM705 664h1v1h-1zM705 674h1v1h-1zM705 684h1v1h-1zM705 693h1v1h-1zM705 703h1v1h-1zM705 713h1v1h-1zM705 723h1v1h-1zM705 733h1v1h-1zM705 742h1v1h-1zM705 752h1v1h-1zM705 762h1v1h-1zM705 772h1v1h-1zM705 782h1v1h-1zM705 791h1v1h-1zM714 96h1v1h-1zM714 145h1v1h-1zM714 194h1v1h-1zM714 243h1v1h-1zM714 292h1v1h-1zM714 341h1v1h-1zM714 390h1v1h-1zM714 439h1v1h-1zM714 488h1v1h-1zM714 537h1v1h-1zM714 586h1v1h-1zM714 635h1v1h-1zM714 684h1v1h-1zM714 733h1v1h-1zM714 782h1v1h-1zM724 96h1v1h-1zM724 145h1v1h-1zM724 194h1v1h-1zM724 243h1v1h-1zM724 292h1v1h-1zM724 341h1v1h-1zM724 390h1v1h-1zM724 439h1v1h-1zM724 488h1v1h-1zM724 537h1v1h-1zM724 586h1v1h-1zM724 635h1v1h-1zM724 684h1v1h-1zM724 733h1v1h-1zM724 782h1v1h-1zM734 96h1v1h-1zM734 145h1v1h-1zM734 194h1v1h-1zM734 243h1v1h-1zM734 292h1v1h-1zM734 341h1v1h-1zM734 390h1v1h-1zM734 439h1v1h-1zM734 488h1v1h-1zM734 537h1v1h-1zM734 586h1v1h-1zM734 635h1v1h-1zM734 684h1v1h-1zM734 733h1v1h-1zM734 782h1v1h-1zM744 96h1v1h-1zM744 145h1v1h-1zM744 194h1v1h-1zM744 243h1v1h-1zM744 292h1v1h-1zM744 341h1v1h-1zM744 390h1v1h-1zM744 439h1v1h-1zM744 488h1v1h-1zM744 537h1v1h-1zM744 586h1v1h-1zM744 635h1v1h-1zM744 684h1v1h-1zM744 733h1v1h-1zM744 782h1v1h-1zM754 56h1v1h-1zM754 66h1v1h-1zM754 76h1v1h-1zM754 86h1v1h-1zM754 96h1v1h-1zM754 105h1v1h-1zM754 115h1v1h-1zM754 125h1v1h-1zM754 135h1v1h-1zM754 145h1v1h-1zM754 154h1v1h-1zM754 164h1v1h-1zM754 174h1v1h-1zM754 184h1v1h-1zM754 194h1v1h-1zM754 203h1v1h-1zM754 213h1v1h-1zM754 223h1v1h-1zM754 233h1v1h-1zM754 243h1v1h-1zM754 252h1v1h-1zM754 262h1v1h-1zM754 272h1v1h-1zM754 282h1v1h-1zM754 292h1v1h-1zM754 301h1v1h-1zM754 311h1v1h-1zM754 321h1v1h-1zM754 331h1v1h-1zM754 341h1v1h-1zM754 350h1v1h-1zM754 360h1v1h-1zM754 370h1v1h-1zM754 380h1v1h-1zM754 390h1v1h-1zM754 399h1v1h-1zM754 409h1v1h-1zM754 419h1v1h-1zM754 429h1v1h-1zM754 439h1v1h-1zM754 448h1v1h-1zM754 458h1v1h-1zM754 468h1v1h-1zM754 478h1v1h-1zM754 488h1v1h-1zM754 497h1v1h-1zM754 507h1v1h-1zM754 517h1v1h-1zM754 527h1v1h-1zM754 537h1v1h-1zM754 546h1v1h-1zM754 556h1v1h-1zM754 566h1v1h-1zM754 576h1v1h-1zM754 586h1v1h-1zM754 595h1v1h-1zM754 605h1v1h-1zM754 615h1v1h-1zM754 625h1v1h-1zM754 635h1v1h-1zM754 644h1v1h-1zM754 654h1v1h-1zM754 664h1v1h-1zM754 674h1v1h-1zM754 684h1v1h-1zM754 693h1v1h-1zM754 703h1v1h-1zM754 713h1v1h-1zM754 723h1v1h-1zM754 733h1v1h-1zM754 742h1v1h-1zM754 752h1v1h-1zM754 762h1v1h-1zM754 772h1v1h-1zM754 782h1v1h-1zM754 791h1v1h-1zM763 96h1v1h-1zM763 145h1v1h-1zM763 194h1v1h-1zM763 243h1v1h-1zM763 292h1v1h-1zM763 341h1v1h-1zM763 390h1v1h-1zM763 439h1v1h-1zM763 488h1v1h-1zM763 537h1v1h-1zM763 586h1v1h-1zM763 635h1v1h-1zM763 684h1v1h-1zM763 733h1v1h-1zM763 782h1v1h-1zM773 96h1v1h-1zM773 145h1v1h-1zM773 194h1v1h-1zM773 243h1v1h-1zM773 292h1v1h-1zM773 341h1v1h-1zM773 390h1v1h-1zM773 439h1v1h-1zM773 488h1v1h-1zM773 537h1v1h-1zM773 586h1v1h-1zM773 635h1v1h-1zM773 684h1v1h-1zM773 733h1v1h-1zM773 782h1v1h-1zM783 96h1v1h-1zM783 145h1v1h-1zM783 194h1v1h-1zM783 243h1v1h-1zM783 292h1v1h-1zM783 341h1v1h-1zM783 390h1v1h-1zM783 439h1v1h-1zM783 488h1v1h-1zM783 537h1v1h-1zM783 586h1v1h-1zM783 635h1v1h-1zM783 684h1v1h-1zM783 733h1v1h-1zM783 782h1v1h-1zM793 96h1v1h-1zM793 145h1v1h-1zM793 194h1v1h-1zM793 243h1v1h-1zM793 292h1v1h-1zM793 341h1v1h-1zM793 390h1v1h-1zM793 439h1v1h-1zM793 488h1v1h-1zM793 537h1v1h-1zM793 586h1v1h-1zM793 635h1v1h-1zM793 684h1v1h-1zM793 733h1v1h-1zM793 782h1v1h-1zM803 56h1v1h-1zM803 66h1v1h-1zM803 76h1v1h-1zM803 86h1v1h-1zM803 96h1v1h-1zM803 105h1v1h-1zM803 115h1v1h-1zM803 125h1v1h-1zM803 135h1v1h-1zM803 145h1v1h-1zM803 154h1v1h-1zM803 164h1v1h-1zM803 174h1v1h-1zM803 184h1v1h-1zM803 194h1v1h-1zM803 203h1v1h-1zM803 213h1v1h-1zM803 223h1v1h-1zM803 233h1v1h-1zM803 243h1v1h-1zM803 252h1v1h-1zM803 262h1v1h-1zM803 272h1v1h-1zM803 282h1v1h-1zM803 292h1v1h-1zM803 301h1v1h-1zM803 311h1v1h-1zM803 321h1v1h-1zM803 331h1v1h-1zM803 341h1v1h-1zM803 350h1v1h-1zM803 360h1v1h-1zM803 370h1v1h-1zM803 380h1v1h-1zM803 390h1v1h-1zM803 399h1v1h-1zM803 409h1v1h-1zM803 419h1v1h-1zM803 429h1v1h-1zM803 439h1v1h-1zM803 448h1v1h-1zM803 458h1v1h-1zM803 468h1v1h-1zM803 478h1v1h-1zM803 488h1v1h-1zM803 497h1v1h-1zM803 507h1v1h-1zM803 517h1v1h-1zM803 527h1v1h-1zM803 537h1v1h-1zM803 546h1v1h-1zM803 556h1v1h-1zM803 566h1v1h-1zM803 576h1v1h-1zM803 586h1v1h-1zM803 595h1v1h-1zM803 605h1v1h-1zM803 615h1v1h-1zM803 625h1v1h-1zM803 635h1v1h-1zM803 644h1v1h-1zM803 654h1v1h-1zM803 664h1v1h-1zM803 674h1v1h-1zM803 684h1v1h-1zM803 693h1v1h-1zM803 703h1v1h-1zM803 713h1v1h-1zM803 723h1v1h-1zM803 733h1v1h-1zM803 742h1v1h-1zM803 752h1v1h-1zM803 762h1v1h-1zM803 772h1v1h-1zM803 782h1v1h-1zM803 791h1v1h-1zM812 96h1v1h-1zM812 145h1v1h-1zM812 194h1v1h-1zM812 243h1v1h-1zM812 292h1v1h-1zM812 341h1v1h-1zM812 390h1v1h-1zM812 439h1v1h-1zM812 488h1v1h-1zM812 537h1v1h-1zM812 586h1v1h-1zM812 635h1v1h-1zM812 684h1v1h-1zM812 733h1v1h-1zM812 782h1v1h-1zM822 96h1v1h-1zM822 145h1v1h-1zM822 194h1v1h-1zM822 243h1v1h-1zM822 292h1v1h-1zM822 341h1v1h-1zM822 390h1v1h-1zM822 439h1v1h-1zM822 488h1v1h-1zM822 537h1v1h-1zM822 586h1v1h-1zM822 635h1v1h-1zM822 684h1v1h-1zM822 733h1v1h-1zM822 782h1v1h-1zM832 96h1v1h-1zM832 145h1v1h-1zM832 194h1v1h-1zM832 243h1v1h-1zM832 292h1v1h-1zM832 341h1v1h-1zM832 390h1v1h-1zM832 439h1v1h-1zM832 488h1v1h-1zM832 537h1v1h-1zM832 586h1v1h-1zM832 635h1v1h-1zM832 684h1v1h-1zM832 733h1v1h-1zM832 782h1v1h-1zM842 96h1v1h-1zM842 145h1v1h-1zM842 194h1v1h-1zM842 243h1v1h-1zM842 292h1v1h-1zM842 341h1v1h-1zM842 390h1v1h-1zM842 439h1v1h-1zM842 488h1v1h-1zM842 537h1v1h-1zM842 586h1v1h-1zM842 635h1v1h-1zM842 684h1v1h-1zM842 733h1v1h-1zM842 782h1v1h-1zM852 56h1v1h-1zM852 66h1v1h-1zM852 76h1v1h-1zM852 86h1v1h-1zM852 96h1v1h-1zM852 105h1v1h-1zM852 115h1v1h-1zM852 125h1v1h-1zM852 135h1v1h-1zM852 145h1v1h-1zM852 154h1v1h-1zM852 164h1v1h-1zM852 174h1v1h-1zM852 184h1v1h-1zM852 194h1v1h-1zM852 203h1v1h-1zM852 213h1v1h-1zM852 223h1v1h-1zM852 233h1v1h-1zM852 243h1v1h-1zM852 252h1v1h-1zM852 262h1v1h-1zM852 272h1v1h-1zM852 282h1v1h-1zM852 292h1v1h-1zM852 301h1v1h-1zM852 311h1v1h-1zM852 321h1v1h-1zM852 331h1v1h-1zM852 341h1v1h-1zM852 350h1v1h-1zM852 360h1v1h-1zM852 370h1v1h-1zM852 380h1v1h-1zM852 390h1v1h-1zM852 399h1v1h-1zM852 409h1v1h-1zM852 419h1v1h-1zM852 429h1v1h-1zM852 439h1v1h-1zM852 448h1v1h-1zM852 458h1v1h-1zM852 468h1v1h-1zM852 478h1v1h-1zM852 488h1v1h-1zM852 497h1v1h-1zM852 507h1v1h-1zM852 517h1v1h-1zM852 527h1v1h-1zM852 537h1v1h-1zM852 546h1v1h-1zM852 556h1v1h-1zM852 566h1v1h-1zM852 576h1v1h-1zM852 586h1v1h-1zM852 595h1v1h-1zM852 605h1v1h-1zM852 615h1v1h-1zM852 625h1v1h-1zM852 635h1v1h-1zM852 644h1v1h-1zM852 654h1v1h-1zM852 664h1v1h-1zM852 674h1v1h-1zM852 684h1v1h-1zM852 693h1v1h-1zM852 703h1v1h-1zM852 713h1v1h-1zM852 723h1v1h-1zM852 733h1v1h-1zM852 742h1v1h-1zM852 752h1v1h-1zM852 762h1v1h-1zM852 772h1v1h-1zM852 782h1v1h-1zM852 791h1v1h-1zM861 96h1v1h-1zM861 145h1v1h-1zM861 194h1v1h-1zM861 243h1v1h-1zM861 292h1v1h-1zM861 341h1v1h-1zM861 390h1v1h-1zM861 439h1v1h-1zM861 488h1v1h-1zM861 537h1v1h-1zM861 586h1v1h-1zM861 635h1v1h-1zM861 684h1v1h-1zM861 733h1v1h-1zM861 782h1v1h-1zM871 96h1v1h-1zM871 145h1v1h-1zM871 194h1v1h-1zM871 243h1v1h-1zM871 292h1v1h-1zM871 341h1v1h-1zM871 390h1v1h-1zM871 439h1v1h-1zM871 488h1v1h-1zM871 537h1v1h-1zM871 586h1v1h-1zM871 635h1v1h-1zM871 684h1v1h-1zM871 733h1v1h-1zM871 782h1v1h-1zM881 96h1v1h-1zM881 145h1v1h-1zM881 194h1v1h-1zM881 243h1v1h-1zM881 292h1v1h-1zM881 341h1v1h-1zM881 390h1v1h-1zM881 439h1v1h-1zM881 488h1v1h-1zM881 537h1v1h-1zM881 586h1v1h-1zM881 635h1v1h-1zM881 684h1v1h-1zM881 733h1v1h-1zM881 782h1v1h-1zM891 96h1v1h-1zM891 145h1v1h-1zM891 194h1v1h-1zM891 243h1v1h-1zM891 292h1v1h-1zM891 341h1v1h-1zM891 390h1v1h-1zM891 439h1v1h-1zM891 488h1v1h-1zM891 537h1v1h-1zM891 586h1v1h-1zM891 635h1v1h-1zM891 684h1v1h-1zM891 733h1v1h-1zM891 782h1v1h-1zM901 56h1v1h-1zM901 66h1v1h-1zM901 76h1v1h-1zM901 86h1v1h-1zM901 96h1v1h-1zM901 105h1v1h-1zM901 115h1v1h-1zM901 125h1v1h-1zM901 135h1v1h-1zM901 145h1v1h-1zM901 154h1v1h-1zM901 164h1v1h-1zM901 174h1v1h-1zM901 184h1v1h-1zM901 194h1v1h-1zM901 203h1v1h-1zM901 213h1v1h-1zM901 223h1v1h-1zM901 233h1v1h-1zM901 243h1v1h-1zM901 252h1v1h-1zM901 262h1v1h-1zM901 272h1v1h-1zM901 282h1v1h-1zM901 292h1v1h-1zM901 301h1v1h-1zM901 311h1v1h-1zM901 321h1v1h-1zM901 331h1v1h-1zM901 341h1v1h-1zM901 350h1v1h-1zM901 360h1v1h-1zM901 370h1v1h-1zM901 380h1v1h-1zM901 390h1v1h-1zM901 399h1v1h-1zM901 409h1v1h-1zM901 419h1v1h-1zM901 429h1v1h-1zM901 439h1v1h-1zM901 448h1v1h-1zM901 458h1v1h-1zM901 468h1v1h-1zM901 478h1v1h-1zM901 488h1v1h-1zM901 497h1v1h-1zM901 507h1v1h-1zM901 517h1v1h-1zM901 527h1v1h-1zM901 537h1v1h-1zM901 546h1v1h-1zM901 556h1v1h-1zM901 566h1v1h-1zM901 576h1v1h-1zM901 586h1v1h-1zM901 595h1v1h-1zM901 605h1v1h-1zM901 615h1v1h-1zM901 625h1v1h-1zM901 635h1v1h-1zM901 644h1v1h-1zM901 654h1v1h-1zM901 664h1v1h-1zM901 674h1v1h-1zM901 684h1v1h-1zM901 693h1v1h-1zM901 703h1v1h-1zM901 713h1v1h-1zM901 723h1v1h-1zM901 733h1v1h-1zM901 742h1v1h-1zM901 752h1v1h-1zM901 762h1v1h-1zM901 772h1v1h-1zM901 782h1v1h-1zM901 791h1v1h-1zM910 96h1v1h-1zM910 145h1v1h-1zM910 194h1v1h-1zM910 243h1v1h-1zM910 292h1v1h-1zM910 341h1v1h-1zM910 390h1v1h-1zM910 439h1v1h-1zM910 488h1v1h-1zM910 537h1v1h-1zM910 586h1v1h-1zM910 635h1v1h-1zM910 684h1v1h-1zM910 733h1v1h-1zM910 782h1v1h-1zM920 96h1v1h-1zM920 145h1v1h-1zM920 194h1v1h-1zM920 243h1v1h-1zM920 292h1v1h-1zM920 341h1v1h-1zM920 390h1v1h-1zM920 439h1v1h-1zM920 488h1v1h-1zM920 537h1v1h-1zM920 586h1v1h-1zM920 635h1v1h-1zM920 684h1v1h-1zM920 733h1v1h-1zM920 782h1v1h-1zM930 96h1v1h-1zM930 145h1v1h-1zM930 194h1v1h-1zM930 243h1v1h-1zM930 292h1v1h-1zM930 341h1v1h-1zM930 390h1v1h-1zM930 439h1v1h-1zM930 488h1v1h-1zM930 537h1v1h-1zM930 586h1v1h-1zM930 635h1v1h-1zM930 684h1v1h-1zM930 733h1v1h-1zM930 782h1v1h-1z" fill="#777"/><path d="M225.5 60.5Q225.5 52.5 233.5 52.5H930.5Q938.5 52.5 938.5 60.5V786.5Q938.5 794.5 930.5 794.5H233.5Q225.5 794.5 225.5 786.5Z" fill="none" stroke="#3c3c3c" stroke-width="1"/><path d="M225.5 74.5H490.5L499.5 66.5V52.5" fill="none" stroke="#3c3c3c" stroke-width="1"/><path d="M494 115H497V238H268V236H494Z" fill="#b8b8b8"/><path d="M265.5 97.5H478.5L493.5 112.5V235.5H265.5Z" fill="#fff" stroke="#3c3c3c"/><path d="M478.5 97.5V112.5H493.5" fill="none" stroke="#3c3c3c"/><path d="M493.5 235.5H541.5Q547.5 235.5 547.5 241.5V374" fill="none" stroke="#3c3c3c" stroke-dasharray="10 5"/><circle cx="567.5" cy="118.5" r="11" fill="#3c3c3c"/><path d="M567.5 129V373" stroke="#3c3c3c" stroke-width="2" fill="none"/><path d="M562 364L567.5 373.5L573 364" stroke="#3c3c3c" stroke-width="2" fill="none"/><path d="M567.5 467V751" stroke="#3c3c3c" stroke-width="2" fill="none"/><path d="M562 743L567.5 751.5L573 743" stroke="#3c3c3c" stroke-width="2" fill="none"/><circle cx="569.5" cy="765.5" r="11" fill="#b8b8b8"/><circle cx="567.5" cy="763.5" r="11" fill="#fff" stroke="#3c3c3c" stroke-width="1.2"/><circle cx="567.5" cy="763.5" r="6.5" fill="#3c3c3c"/><path d="M278 379.5H506" stroke="#3c3c3c" fill="none"/><path d="M660 384.5H879" stroke="#3c3c3c" fill="none"/><path d="M870 379L879.5 384.5L870 390" stroke="#3c3c3c" fill="none" stroke-width="1.2"/><rect x="515.5" y="376.5" width="147" height="92" rx="8" fill="#c4c4c4"/><rect x="513.5" y="374.5" width="146" height="92" rx="8" fill="#e2e1bf" stroke="#3c3c3c"/><rect x="518.5" y="395.5" width="116" height="13" fill="none" stroke="#a8a8a8" stroke-dasharray="4 3"/><rect x="638.5" y="379.5" width="14" height="15" fill="#fff" stroke="#888"/><rect x="640" y="381" width="11" height="12" fill="#fff" stroke="#000" stroke-width="2"/><path d="M645.5 382.5l1.2 1.3 1.8-.3.3 1.8 1.3 1.2-1.3 1.2-.3 1.8-1.8-.3-1.2 1.3-1.2-1.3-1.8.3-.3-1.8-1.3-1.2 1.3-1.2.3-1.8 1.8.3z" fill="#b8b8b8" stroke="#111" stroke-width="0.9"/><rect x="645" y="387" width="1.6" height="1.6" fill="#000"/><rect x="507" y="368" width="6" height="6" fill="#000"/><rect x="659" y="368" width="6" height="6" fill="#000"/><rect x="507" y="466" width="6" height="6" fill="#000"/><path d="M504 374L511 378" stroke="#3c3c3c" stroke-width="0.9"/><path d="M504.5 385.5L507 383" stroke="#3c3c3c" stroke-width="0.8"/><rect x="506.6" y="378.6" width="7.8" height="7.8" fill="#fff" stroke="#000" stroke-width="1.4"/><path d="M508.5 381v2.5M510.5 381v2.5M512.5 381v2.5" stroke="#555" stroke-width="0.9"/><rect x="518.8" y="463.8" width="5.6" height="5.6" fill="#fff" stroke="#000" stroke-width="1.6"/><path d="M520.5 467.5l1.5-2" stroke="#000" stroke-width="1.2"/><rect x="171.5" y="364.5" width="107" height="24" fill="#ccccff" stroke="#3c3c3c"/><rect x="880.5" y="374.5" width="115" height="23" fill="#ccccff" stroke="#3c3c3c"/><rect x="673.5" y="317.5" width="19" height="92" rx="5" fill="#fff" stroke="#c8c8c8"/><path d="M677 341.5H691" stroke="#d8d8d8"/></svg><div class="t" style="left:231px;top:57px;font-size:11px;font-weight:bold;letter-spacing:0.3px">activity Activity Diagram</div><div class="t" style="left:371px;top:57px;font-size:11px">Get Title [</div><div class="t" style="left:444px;top:57px;font-size:11px">Get Title ]</div><div class="t" style="left:270px;top:117px;font-size:11px;letter-spacing:0.47px">This activity uses an action to traverse</div><div class="t" style="left:270px;top:132px;font-size:11px;letter-spacing:0.47px">an input string to an output string,</div><div class="t" style="left:270px;top:147px;font-size:11px;letter-spacing:0.47px">converting it to upper case.</div><div class="a" style="left:641px;top:68px;width:280px;height:191px;border-top:1px solid #777;border-left:1px solid #a0a0a0;border-right:1px solid #a0a0a0;border-bottom:1px solid #a0a0a0"></div><div class="a" style="left:645px;top:71px;width:100px;height:24px;border:1px solid #999;border-top-color:#cfcfcf"></div><div class="a" style="left:746px;top:71px;width:171px;height:24px;border:1px solid #999;border-top-color:#cfcfcf"></div><div class="t" style="left:649px;top:78px;font-size:11px;letter-spacing:0.8px">Diagram name</div><div class="t" style="left:750px;top:78px;font-size:11px;letter-spacing:0.4px">Get Title</div><div class="a" style="left:645px;top:97px;width:100px;height:24px;border:1px solid #999;border-top-color:#cfcfcf"></div><div class="a" style="left:746px;top:97px;width:171px;height:24px;border:1px solid #999;border-top-color:#cfcfcf"></div><div class="t" style="left:649px;top:104px;font-size:11px;letter-spacing:0.4px">Author</div><div class="t" style="left:750px;top:104px;font-size:11px;letter-spacing:0.4px"></div><div class="a" style="left:645px;top:123px;width:100px;height:24px;border:1px solid #999;border-top-color:#cfcfcf"></div><div class="a" style="left:746px;top:123px;width:171px;height:24px;border:1px solid #999;border-top-color:#cfcfcf"></div><div class="t" style="left:649px;top:130px;font-size:11px;letter-spacing:0.4px">Creation date</div><div class="t" style="left:750px;top:130px;font-size:11px;letter-spacing:0.4px">6/21/07 4:54 PM</div><div class="a" style="left:645px;top:149px;width:100px;height:23px;border:1px solid #999;border-top-color:#cfcfcf"></div><div class="a" style="left:746px;top:149px;width:171px;height:23px;border:1px solid #999;border-top-color:#cfcfcf"></div><div class="t" style="left:649px;top:155px;font-size:11px;letter-spacing:0.4px">Modification date</div><div class="t" style="left:750px;top:155px;font-size:11px;letter-spacing:0.4px">3/8/16 10:40 AM</div><div class="a" style="left:645px;top:174px;width:100px;height:40px;border:1px solid #999;border-top-color:#cfcfcf"></div><div class="a" style="left:746px;top:174px;width:171px;height:40px;border:1px solid #999;border-top-color:#cfcfcf"></div><div class="t" style="left:649px;top:188px;font-size:11px;letter-spacing:0.7px">Documentation</div><div class="t" style="left:750px;top:179px;font-size:11px;letter-spacing:0.55px;line-height:16px">- add documentation via<br>diagram specification -</div><div class="a" style="left:645px;top:216px;width:100px;height:39px;border:1px solid #999;border-top-color:#cfcfcf"></div><div class="a" style="left:746px;top:216px;width:171px;height:39px;border:1px solid #999;border-top-color:#cfcfcf"></div><div class="t" style="left:649px;top:230px;font-size:11px;letter-spacing:0.4px">TODO</div><div class="t" style="left:750px;top:221px;font-size:11px;letter-spacing:0.55px;line-height:16px">- add To Do via diagram<br>specification -</div><div class="t" style="left:172px;top:369px;width:107px;text-align:center;font-size:11px;font-weight:bold;letter-spacing:0.13px">inputTitle : String</div><div class="t" style="left:881px;top:379px;width:115px;text-align:center;font-size:11px;font-weight:bold;letter-spacing:0.13px">outputTitle : String</div><div class="t" style="left:514px;top:379px;width:124px;text-align:center;font-size:11px;letter-spacing:0.3px;color:#0000f0">&#171;ActionScript&#187;</div><div class="t" style="left:519px;top:396px;width:116px;text-align:center;font-size:11px;font-weight:bold">Get Title</div><div class="t" style="left:516px;top:415px;font-size:11px;letter-spacing:0.53px">{script = "set</div><div class="t" style="left:516px;top:431px;font-size:11px;letter-spacing:0.53px">outputTitle =</div><div class="t" style="left:516px;top:447px;font-size:11px;letter-spacing:0.53px">inputTitle.toUpper</div><div class="a" style="left:1105px;top:47px;width:16px;height:789px;background:#f0f0f0"></div><div class="a" style="left:1105px;top:64px;width:16px;height:479px;background:#cdcdcd"></div><div class="a" style="left:166px;top:836px;width:939px;height:16px;background:#f0f0f0"></div><div class="a" style="left:183px;top:836px;width:642px;height:16px;background:#cdcdcd"></div><div class="a" style="left:1105px;top:836px;width:16px;height:16px;background:#fff"></div><svg class="a" style="left:0;top:0" width="1125" height="856"><path d="M678 325.5H688M683 325.5V336" stroke="#cc1a00" stroke-width="2" fill="none"/><rect x="678" y="328" width="1.5" height="1.5" fill="#444"/><rect x="678" y="332" width="1.5" height="1.5" fill="#444"/><path d="M676 346L684 354M680 354H684.5V349.5" stroke="#3a62d0" stroke-width="1.3" fill="none"/><rect x="684.5" y="355.5" width="6" height="4" fill="#e2e0b0" stroke="#555"/><path d="M676 368.5H685.5V375M683 372.5L685.5 375L688 372.5" stroke="#3a62d0" stroke-width="1.3" fill="none"/><rect x="683.5" y="376.5" width="6" height="4" fill="#e2e0b0" stroke="#555"/><rect x="681.5" y="387.5" width="8" height="7" fill="#f2eda8" stroke="#555"/><path d="M683 390.5H688M683 392.5H688" stroke="#555"/><path d="M676 401L681 396" stroke="#555" stroke-dasharray="1.5 1.5"/><path d="M424.5 56.5H435L439.5 61V71.5H424.5Z" fill="#e2e2e2" stroke="#6a6a6a"/><path d="M435 56.5V61H439.5Z" fill="#fff" stroke="#888" stroke-width="0.8"/><rect x="426" y="59" width="2.6" height="2.8" fill="#333"/><path d="M428.5 60.5H432" stroke="#333"/><rect x="432" y="58.5" width="5" height="4" rx="1.2" fill="#c8dcf4" stroke="#333"/><path d="M434.5 62.5V68M433.2 66.5H435.8" stroke="#333"/><rect x="427" y="68" width="9.8" height="1.8" fill="#333"/><path d="M1109.5 59L1113 55.5L1116.5 59" stroke="#505050" stroke-width="2" fill="none"/><path d="M1109.5 825L1113 828.5L1116.5 825" stroke="#505050" stroke-width="2" fill="none"/><path d="M176.5 840L173 843.5L176.5 847" stroke="#505050" stroke-width="2" fill="none"/><path d="M1094.5 840L1098 843.5L1094.5 847" stroke="#505050" stroke-width="2" fill="none"/></svg><div class="a" style="left:613px;top:402px;width:275px;height:350px;background:#fff;border:1px solid #3d9bf8"></div><div class="a" style="left:616px;top:451px;width:269px;height:22px;background:linear-gradient(90deg,#fff 0px,#fff 4px,#f3f8fe 4px,#f3f8fe 10px,#e9f2fc 10px,#e9f2fc 20px,#dde9f9 20px)"></div><div class="a" style="left:617px;top:452px;width:267px;height:20px;border:1px solid #f2f7fe;border-left:none"></div><div class="a" style="left:616px;top:451px;width:269px;height:1px;background:linear-gradient(90deg,#fff 0px,#a8d0fc 8px,#60aafa 18px,#3d9bf8 25px)"></div><div class="a" style="left:616px;top:472px;width:269px;height:1px;background:linear-gradient(90deg,#fff 0px,#a8d0fc 8px,#60aafa 18px,#3d9bf8 25px)"></div><div class="a" style="left:884px;top:451px;width:1px;height:22px;background:#3d9bf8"></div><div class="t" style="left:647px;top:409px;font-size:12px;letter-spacing:0px">Specification</div><div class="t" style="left:824px;top:409px;font-size:12px">Enter</div><div class="t" style="left:647px;top:431px;font-size:12px;letter-spacing:0px">Symbol Properties</div><div class="t" style="left:824px;top:431px;font-size:12px">Alt+Enter</div><div class="t" style="left:647px;top:456px;font-size:12px;letter-spacing:0px">E2E Action Script Editor</div><div class="t" style="left:824px;top:456px;font-size:12px">Ctrl+Enter</div><div class="t" style="left:647px;top:478px;font-size:12px;letter-spacing:0px">E2E Action Wizard</div><div class="t" style="left:824px;top:478px;font-size:12px">Alt+W</div><div class="t" style="left:647px;top:503px;font-size:12px;letter-spacing:0px">Add Breakpoint</div><div class="t" style="left:647px;top:525px;font-size:12px;letter-spacing:0px">Remove Breakpoint</div><div class="t" style="left:647px;top:550px;font-size:12px;letter-spacing:0px">Behavior</div><div class="t" style="left:824px;top:550px;font-size:12px">Ctrl+T</div><div class="t" style="left:647px;top:571px;font-size:12px;letter-spacing:0px">Create Diagram</div><div class="a" style="left:873px;top:574px;width:0;height:0;border-top:4px solid transparent;border-bottom:4px solid transparent;border-left:4px solid #000"></div><div class="t" style="left:647px;top:595px;font-size:12px;letter-spacing:0px">Go To</div><div class="a" style="left:873px;top:598px;width:0;height:0;border-top:4px solid transparent;border-bottom:4px solid transparent;border-left:4px solid #000"></div><div class="t" style="left:647px;top:617px;font-size:12px;letter-spacing:0px">Select in Containment Tree</div><div class="t" style="left:824px;top:617px;font-size:12px">Alt+B</div><div class="t" style="left:647px;top:641px;font-size:12px;letter-spacing:0px">Related Elements</div><div class="a" style="left:873px;top:643px;width:0;height:0;border-top:4px solid transparent;border-bottom:4px solid transparent;border-left:4px solid #000"></div><div class="t" style="left:647px;top:662px;font-size:12px;letter-spacing:0px">Refactor</div><div class="a" style="left:873px;top:664px;width:0;height:0;border-top:4px solid transparent;border-bottom:4px solid transparent;border-left:4px solid #000"></div><div class="t" style="left:647px;top:683px;font-size:12px;letter-spacing:0px">Tools</div><div class="a" style="left:873px;top:685px;width:0;height:0;border-top:4px solid transparent;border-bottom:4px solid transparent;border-left:4px solid #000"></div><div class="t" style="left:647px;top:708px;font-size:12px;letter-spacing:0px">Edit Compartments</div><div class="t" style="left:647px;top:733px;font-size:12px;letter-spacing:0px">Stereotype</div><div class="a" style="left:647px;top:449px;width:239px;height:1px;background:#e0e0e0"></div><div class="a" style="left:647px;top:497px;width:239px;height:1px;background:#e0e0e0"></div><div class="a" style="left:647px;top:544px;width:239px;height:1px;background:#e0e0e0"></div><div class="a" style="left:647px;top:589px;width:239px;height:1px;background:#e0e0e0"></div><div class="a" style="left:647px;top:636px;width:239px;height:1px;background:#e0e0e0"></div><div class="a" style="left:647px;top:701px;width:239px;height:1px;background:#e0e0e0"></div><div class="a" style="left:647px;top:726px;width:239px;height:1px;background:#e0e0e0"></div><svg class="a" style="left:0;top:0" width="1125" height="856"><path d="M620.5 616.5h3l1 1h2.5v3.5h-6.5zM622.5 621v7.5h4v-7.5M622.5 624.5h4M626.5 621.5h3l1 1h2v3.5h-6zM626.5 626.5h3l1 1h2v3.5h-6z" fill="#fff" stroke="#333" stroke-width="1.1"/><path d="M621.5 618.5h4M627.5 623.5h4M627.5 628.5h4" stroke="#ddd"/><path d="M789.5 466.5V483L793.2 479.4L796.2 485.3L798.6 484.2L795.8 478.4H801Z" fill="#fff" stroke="#000" stroke-width="1.1" stroke-linejoin="round"/></svg></body></html>
